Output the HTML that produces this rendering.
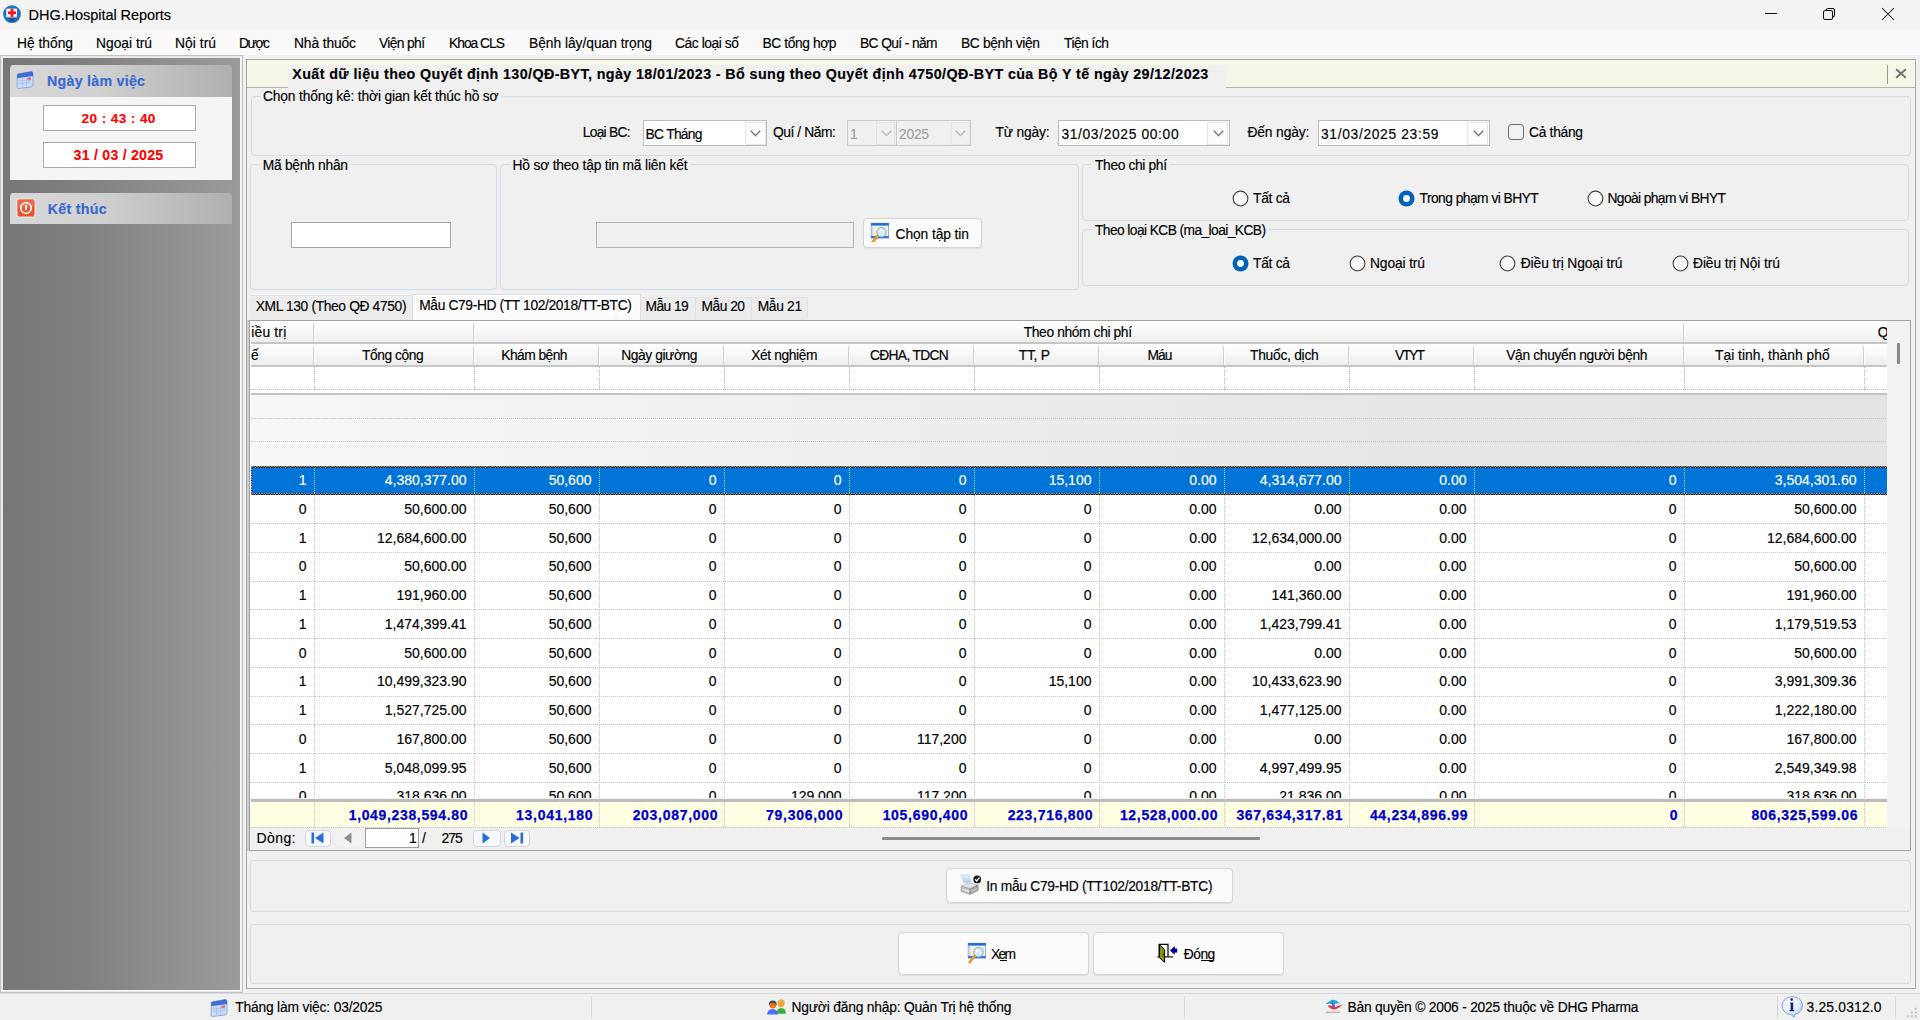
<!DOCTYPE html>
<html><head><meta charset="utf-8"><title>DHG.Hospital Reports</title>
<style>
html,body{margin:0;padding:0;}
body{width:1920px;height:1020px;overflow:hidden;position:relative;background:#f0f0f0;font-family:"Liberation Sans", sans-serif;color:#000;}
.a{position:absolute;box-sizing:border-box;}
.t{white-space:pre;-webkit-text-stroke:0.15px currentColor;}
</style></head><body>
<div class="a" style="left:0px;top:0px;width:1920px;height:29px;background:#f3f3f3"></div>
<svg class="a" style="left:2px;top:4px;" width="20" height="20" viewBox="0 0 20 20">
<circle cx="10" cy="10.1" r="8.9" fill="#2170cc"/>
<rect x="4.3" y="4.7" width="10.6" height="8.9" fill="#fff"/>
<rect x="4.3" y="12.2" width="10.6" height="1.4" fill="#c8d4e4"/>
<rect x="8.6" y="5" width="2.8" height="7.8" fill="#ff1010"/>
<rect x="6" y="7.4" width="8" height="2.8" fill="#ff1010"/>
<rect x="4" y="13.6" width="11.5" height="1.3" fill="#1a4f96"/>
<rect x="8.8" y="14.9" width="2.6" height="1.6" fill="#1a3f76"/>
<rect x="6.5" y="16.5" width="7" height="0.9" fill="#1a3f76"/>
</svg>
<div class="a t" style="left:28.60px;top:8px;font-size:14.5px;line-height:14.5px;letter-spacing:-0.049px;">DHG.Hospital Reports</div>
<div class="a" style="left:1765px;top:13px;width:12px;height:1px;background:#111"></div>
<svg class="a" style="left:1822px;top:7px;" width="14" height="14" viewBox="0 0 14 14">
<path d="M4 3.2 Q4.5 1.5 6.5 1.5 L10.5 1.5 Q12.5 1.5 12.5 3.5 L12.5 7.5 Q12.5 9.5 11 10" fill="none" stroke="#111" stroke-width="1.05"/>
<rect x="1.5" y="3.5" width="9" height="9" rx="1.8" fill="none" stroke="#111" stroke-width="1.05"/>
</svg>
<svg class="a" style="left:1881px;top:7px;" width="14" height="14" viewBox="0 0 14 14"><path d="M1 1 L13 13 M13 1 L1 13" stroke="#111" stroke-width="1.05"/></svg>
<div class="a" style="left:0px;top:29px;width:1920px;height:26px;background:#f9f9f9"></div>
<div class="a t" style="left:17.00px;top:37px;font-size:13.8px;line-height:13.8px;">Hệ thống</div>
<div class="a t" style="left:96.00px;top:37px;font-size:13.8px;line-height:13.8px;">Ngoại trú</div>
<div class="a t" style="left:175.00px;top:37px;font-size:13.8px;line-height:13.8px;letter-spacing:0.060px;">Nội trú</div>
<div class="a t" style="left:239.00px;top:37px;font-size:13.8px;line-height:13.8px;letter-spacing:-1.385px;">Dược</div>
<div class="a t" style="left:294.00px;top:37px;font-size:13.8px;line-height:13.8px;letter-spacing:-0.113px;">Nhà thuốc</div>
<div class="a t" style="left:379.00px;top:37px;font-size:13.8px;line-height:13.8px;letter-spacing:-0.627px;">Viện phí</div>
<div class="a t" style="left:449.00px;top:37px;font-size:13.8px;line-height:13.8px;letter-spacing:-0.987px;">Khoa CLS</div>
<div class="a t" style="left:529.00px;top:37px;font-size:13.8px;line-height:13.8px;letter-spacing:-0.028px;">Bệnh lây/quan trọng</div>
<div class="a t" style="left:675.00px;top:37px;font-size:13.8px;line-height:13.8px;letter-spacing:-0.427px;">Các loại số</div>
<div class="a t" style="left:762.50px;top:37px;font-size:13.8px;line-height:13.8px;letter-spacing:-0.409px;">BC tổng hợp</div>
<div class="a t" style="left:860.00px;top:37px;font-size:13.8px;line-height:13.8px;letter-spacing:-0.622px;">BC Quí - năm</div>
<div class="a t" style="left:961.00px;top:37px;font-size:13.8px;line-height:13.8px;letter-spacing:-0.349px;">BC bệnh viện</div>
<div class="a t" style="left:1064.00px;top:37px;font-size:13.8px;line-height:13.8px;letter-spacing:-0.511px;">Tiện ích</div>
<div class="a" style="left:0px;top:55px;width:243px;height:938px;background:#e9e9e9;border:1.5px solid #c0c2c6;border-right-width:1.8px"></div>
<div class="a" style="left:240px;top:57px;width:1.2px;height:934px;background:#fafafa"></div>
<div class="a" style="left:1.5px;top:990px;width:240px;height:1.2px;background:#fafafa"></div>
<div class="a" style="left:2.9px;top:57.8px;width:236.9px;height:932px;background:linear-gradient(90deg,#767676 0%,#808080 35%,#8e8e8e 65%,#9b9b9b 100%)"></div>
<div class="a" style="left:10px;top:65px;width:222px;height:32px;background:linear-gradient(90deg,#d8d8d8 0%,#d0d0d0 40%,#bdbdbd 75%,#b0b0b0 100%);border-radius:3.5px 3.5px 0 0"></div>
<svg class="a" style="left:15px;top:69px;" width="20" height="21" viewBox="0 0 20 21">
<path d="M2.5 5 L16 2.5 Q18 2.3 18 4.2 L18 16 Q18 17.6 16.3 17.9 L3.8 19.5 Q2 19.7 2 17.9 Z" fill="#c9dcf5" stroke="#7da0d8" stroke-width="0.8"/>
<path d="M2.2 5 L16 2.5 Q18 2.3 18 4.2 L18 7 L2.2 9.2 Z" fill="#3d6fd6"/>
<rect x="12.5" y="8.6" width="3.5" height="2.6" fill="#ef5a5a"/>
<path d="M4 12 L16 10.6 M4 14.6 L16 13.2 M7.5 9.8 L7.7 18 M11.5 9.2 L11.6 17.6" stroke="#9fbde8" stroke-width="0.7"/>
</svg>
<div class="a t" style="left:47.00px;top:74px;font-size:14.2px;line-height:14.2px;font-weight:bold;color:#3868d0;letter-spacing:0.280px;">Ngày làm việc</div>
<div class="a" style="left:10px;top:97px;width:222px;height:83px;background:#f5f5f5"></div>
<div class="a" style="left:42.5px;top:105px;width:153.5px;height:26px;background:#fff;border:1px solid #a9a9a9"></div>
<div class="a t" style="left:81.60px;top:112px;font-size:13.6px;line-height:13.6px;font-weight:bold;color:#ff0000;letter-spacing:0.388px;">20 : 43 : 40</div>
<div class="a" style="left:42.5px;top:141.5px;width:153.5px;height:26px;background:#fff;border:1px solid #a9a9a9"></div>
<div class="a t" style="left:73.55px;top:148px;font-size:14.2px;line-height:14.2px;font-weight:bold;color:#ff0000;letter-spacing:0.225px;">31 / 03 / 2025</div>
<div class="a" style="left:10px;top:193px;width:222px;height:31px;background:linear-gradient(90deg,#d8d8d8 0%,#d0d0d0 40%,#bdbdbd 75%,#b0b0b0 100%);border-radius:3.5px 3.5px 0 0"></div>
<svg class="a" style="left:16px;top:198px;" width="20" height="20" viewBox="0 0 20 20">
<rect x="1" y="1" width="18" height="18" rx="2.5" fill="#e9542c" stroke="#fff" stroke-width="0.8"/>
<rect x="1.5" y="1.5" width="17" height="8" rx="2" fill="#f47a52" opacity="0.6"/>
<circle cx="10" cy="10" r="5.3" fill="none" stroke="#fff" stroke-width="1.6"/>
<rect x="9.1" y="6.8" width="1.8" height="5.4" rx="0.8" fill="#fff"/>
</svg>
<div class="a t" style="left:47.80px;top:202px;font-size:14.2px;line-height:14.2px;font-weight:bold;color:#3868d0;letter-spacing:0.293px;">Kết thúc</div>
<div class="a" style="left:0px;top:992.5px;width:1920px;height:1px;background:#dadada"></div>
<div class="a t" style="left:235.20px;top:1001px;font-size:13.8px;line-height:13.8px;letter-spacing:-0.172px;">Tháng làm việc: 03/2025</div>
<div class="a" style="left:591px;top:996px;width:1px;height:22px;background:#d8d8d8"></div>
<div class="a t" style="left:791.50px;top:1001px;font-size:13.8px;line-height:13.8px;letter-spacing:-0.187px;">Người đăng nhập: Quản Trị hệ thống</div>
<div class="a" style="left:1184px;top:996px;width:1px;height:22px;background:#d8d8d8"></div>
<div class="a t" style="left:1347.50px;top:1001px;font-size:13.8px;line-height:13.8px;letter-spacing:-0.216px;">Bản quyền © 2006 - 2025 thuộc về DHG Pharma</div>
<div class="a" style="left:1777px;top:996px;width:1px;height:22px;background:#d8d8d8"></div>
<div class="a t" style="left:1806.50px;top:1001px;font-size:13.8px;line-height:13.8px;letter-spacing:0.211px;">3.25.0312.0</div>
<div class="a" style="left:1895px;top:996px;width:1px;height:22px;background:#d8d8d8"></div>
<div class="a" style="left:246px;top:59px;width:1670px;height:930px;border:1.5px solid #a8a8a8"></div>
<div class="a" style="left:247px;top:60px;width:1668px;height:27px;background:#f6f6e7"></div>
<div class="a" style="left:247px;top:86.5px;width:1668px;height:1.5px;background:#b4b4b4"></div>
<div class="a" style="left:287.5px;top:64.5px;width:938.5px;height:24px;background:#f0f0f0"></div>
<div class="a t" style="left:292.30px;top:67px;font-size:14.3px;line-height:14.3px;font-weight:bold;letter-spacing:0.391px;">Xuất dữ liệu theo Quyết định 130/QĐ-BYT, ngày 18/01/2023 - Bổ sung theo Quyết định 4750/QĐ-BYT của Bộ Y tế ngày 29/12/2023</div>
<div class="a" style="left:1887px;top:65px;width:1px;height:19px;background:#9a9a9a"></div>
<svg class="a" style="left:1895px;top:68px;" width="12" height="11" viewBox="0 0 12 11"><path d="M1.2 1.2 L10.8 9.8 M10.8 1.2 L1.2 9.8" stroke="#727272" stroke-width="1.9"/></svg>
<div class="a" style="left:250.5px;top:96px;width:1660.5px;height:60px;border:1px solid #d2dce5;border-radius:4px"></div>
<div class="a" style="left:260px;top:90px;width:241.6px;height:12px;background:#f0f0f0"></div>
<div class="a t" style="left:263.00px;top:90px;font-size:13.8px;line-height:13.8px;letter-spacing:-0.170px;">Chọn thống kê: thời gian kết thúc hồ sơ</div>
<div class="a t" style="left:582.70px;top:126px;font-size:13.8px;line-height:13.8px;letter-spacing:-0.703px;">Loại BC:</div>
<div class="a" style="left:642.5px;top:120.2px;width:124.5px;height:26.2px;background:#fff;border:1.5px solid #b9bbc0"></div>
<div class="a" style="left:744.5px;top:121.7px;width:21px;height:23.2px;background:#fcfcfc;border:1px solid #e6e6e6"></div>
<svg class="a" style="left:750.0px;top:130.3px;" width="11" height="7" viewBox="0 0 11 7"><path d="M0.8 0.8 L5.5 5.6 L10.2 0.8" fill="none" stroke="#6e6e6e" stroke-width="1.3"/></svg>
<div class="a t" style="left:645.50px;top:128px;font-size:13.8px;line-height:13.8px;letter-spacing:-0.696px;">BC Tháng</div>
<div class="a t" style="left:773.00px;top:126px;font-size:13.8px;line-height:13.8px;letter-spacing:-0.434px;">Quí / Năm:</div>
<div class="a" style="left:846.5px;top:120.2px;width:50px;height:26.2px;background:#f0f0f0;border:1.5px solid #c9cacd"></div>
<div class="a" style="left:876.0px;top:121.7px;width:19px;height:23.2px;background:#f0f0f0;border:1px solid #e4e4e4"></div>
<svg class="a" style="left:880.5px;top:130.3px;" width="11" height="7" viewBox="0 0 11 7"><path d="M0.8 0.8 L5.5 5.6 L10.2 0.8" fill="none" stroke="#b8b8b8" stroke-width="1.3"/></svg>
<div class="a t" style="left:850.00px;top:128px;font-size:13.8px;line-height:13.8px;color:#a0a0a0;">1</div>
<div class="a" style="left:895.5px;top:120.2px;width:75.5px;height:26.2px;background:#f0f0f0;border:1.5px solid #c9cacd"></div>
<div class="a" style="left:950.5px;top:121.7px;width:19px;height:23.2px;background:#f0f0f0;border:1px solid #e4e4e4"></div>
<svg class="a" style="left:955.0px;top:130.3px;" width="11" height="7" viewBox="0 0 11 7"><path d="M0.8 0.8 L5.5 5.6 L10.2 0.8" fill="none" stroke="#b8b8b8" stroke-width="1.3"/></svg>
<div class="a t" style="left:899.00px;top:128px;font-size:13.8px;line-height:13.8px;color:#a0a0a0;letter-spacing:-0.234px;">2025</div>
<div class="a t" style="left:995.50px;top:126px;font-size:13.8px;line-height:13.8px;letter-spacing:-0.179px;">Từ ngày:</div>
<div class="a" style="left:1057.5px;top:120.2px;width:172px;height:26.2px;background:#fff;border:1.5px solid #b9bbc0"></div>
<div class="a" style="left:1207.0px;top:121.7px;width:21px;height:23.2px;background:#fcfcfc;border:1px solid #e6e6e6"></div>
<svg class="a" style="left:1212.5px;top:130.3px;" width="11" height="7" viewBox="0 0 11 7"><path d="M0.8 0.8 L5.5 5.6 L10.2 0.8" fill="none" stroke="#6e6e6e" stroke-width="1.3"/></svg>
<div class="a t" style="left:1061.40px;top:128px;font-size:13.8px;line-height:13.8px;letter-spacing:0.652px;">31/03/2025 00:00</div>
<div class="a t" style="left:1247.40px;top:126px;font-size:13.8px;line-height:13.8px;letter-spacing:-0.113px;">Đến ngày:</div>
<div class="a" style="left:1317.5px;top:120.2px;width:172px;height:26.2px;background:#fff;border:1.5px solid #b9bbc0"></div>
<div class="a" style="left:1467.0px;top:121.7px;width:21px;height:23.2px;background:#fcfcfc;border:1px solid #e6e6e6"></div>
<svg class="a" style="left:1472.5px;top:130.3px;" width="11" height="7" viewBox="0 0 11 7"><path d="M0.8 0.8 L5.5 5.6 L10.2 0.8" fill="none" stroke="#6e6e6e" stroke-width="1.3"/></svg>
<div class="a t" style="left:1321.00px;top:128px;font-size:13.8px;line-height:13.8px;letter-spacing:0.672px;">31/03/2025 23:59</div>
<div class="a" style="left:1508.3px;top:124px;width:16.2px;height:16px;border:1.5px solid #6a6a6a;border-radius:3.5px;background:#f2f2f2"></div>
<div class="a t" style="left:1529.00px;top:126px;font-size:13.8px;line-height:13.8px;letter-spacing:-0.286px;">Cả tháng</div>
<div class="a" style="left:250px;top:164px;width:246.5px;height:125.5px;border:1px solid #d2dce5;border-radius:4px"></div>
<div class="a" style="left:259.75px;top:158px;width:91.2px;height:12px;background:#f0f0f0"></div>
<div class="a t" style="left:262.75px;top:159px;font-size:13.8px;line-height:13.8px;letter-spacing:-0.274px;">Mã bệnh nhân</div>
<div class="a" style="left:291px;top:221.5px;width:160px;height:26.5px;background:#fff;border:1.5px solid #a6a6a6"></div>
<div class="a" style="left:500px;top:164px;width:579px;height:125.5px;border:1px solid #d2dce5;border-radius:4px"></div>
<div class="a" style="left:509.5px;top:158px;width:181px;height:12px;background:#f0f0f0"></div>
<div class="a t" style="left:512.50px;top:159px;font-size:13.8px;line-height:13.8px;letter-spacing:-0.175px;">Hồ sơ theo tập tin mã liên kết</div>
<div class="a" style="left:596px;top:221.5px;width:257.5px;height:26.5px;background:#f0f0f0;border:1.5px solid #b4b4b4"></div>
<div class="a" style="left:862.5px;top:218px;width:119px;height:30px;background:#fbfbfb;border:1px solid #d3d3d3;border-radius:4px;box-shadow:0 1px 0 #e2e2e2"></div>
<svg class="a" style="left:870px;top:222px;" width="20" height="20" viewBox="0 0 20 20">
<rect x="1.2" y="1.3" width="17.4" height="14.8" fill="#f4efe4" stroke="#7f9fca" stroke-width="0.8"/>
<rect x="1" y="1" width="17.8" height="2.6" fill="#1f6fd8"/>
<rect x="1" y="13.9" width="17.8" height="2.2" fill="#3f7bd6"/>
<rect x="2.2" y="3.6" width="1.2" height="10.3" fill="#c9d6ea"/>
<circle cx="11.5" cy="10.2" r="4.7" fill="#d6ecf6" stroke="#8ea4b8" stroke-width="1"/>
<circle cx="10.2" cy="8.6" r="1.4" fill="#fff" opacity="0.9"/>
<path d="M7.6 14.2 L2.6 20.2" stroke="#e59a2c" stroke-width="2.6" stroke-linecap="round"/>
</svg>
<div class="a t" style="left:895.50px;top:228px;font-size:13.8px;line-height:13.8px;letter-spacing:-0.082px;">Chọn tập tin</div>
<div class="a" style="left:1082px;top:164px;width:827px;height:56.5px;border:1px solid #d2dce5;border-radius:4px"></div>
<div class="a" style="left:1092px;top:158px;width:78px;height:12px;background:#f0f0f0"></div>
<div class="a t" style="left:1095.00px;top:159px;font-size:13.8px;line-height:13.8px;letter-spacing:-0.358px;">Theo chi phí</div>
<div class="a" style="left:1082px;top:229.2px;width:827px;height:57px;border:1px solid #d2dce5;border-radius:4px"></div>
<div class="a" style="left:1092px;top:223.2px;width:177px;height:12px;background:#f0f0f0"></div>
<div class="a t" style="left:1095.00px;top:224px;font-size:13.8px;line-height:13.8px;letter-spacing:-0.590px;">Theo loại KCB (ma_loai_KCB)</div>
<svg class="a" style="left:1231.5px;top:189.5px;" width="17" height="17" viewBox="0 0 17 17"><circle cx="8.5" cy="8.5" r="7.4" fill="#f8f8f8" stroke="#3c3c3c" stroke-width="1.05"/></svg>
<div class="a t" style="left:1253.00px;top:192px;font-size:13.8px;line-height:13.8px;letter-spacing:-0.269px;">Tất cả</div>
<svg class="a" style="left:1397.5px;top:189.5px;" width="17" height="17" viewBox="0 0 17 17"><circle cx="8.5" cy="8.5" r="8" fill="#0063b8"/><circle cx="8.5" cy="8.5" r="3.4" fill="#fff"/></svg>
<div class="a t" style="left:1419.50px;top:192px;font-size:13.8px;line-height:13.8px;letter-spacing:-0.530px;">Trong phạm vi BHYT</div>
<svg class="a" style="left:1586.5px;top:189.5px;" width="17" height="17" viewBox="0 0 17 17"><circle cx="8.5" cy="8.5" r="7.4" fill="#f8f8f8" stroke="#3c3c3c" stroke-width="1.05"/></svg>
<div class="a t" style="left:1607.50px;top:192px;font-size:13.8px;line-height:13.8px;letter-spacing:-0.608px;">Ngoài phạm vi BHYT</div>
<svg class="a" style="left:1231.5px;top:254.5px;" width="17" height="17" viewBox="0 0 17 17"><circle cx="8.5" cy="8.5" r="8" fill="#0063b8"/><circle cx="8.5" cy="8.5" r="3.4" fill="#fff"/></svg>
<div class="a t" style="left:1253.00px;top:257px;font-size:13.8px;line-height:13.8px;letter-spacing:-0.269px;">Tất cả</div>
<svg class="a" style="left:1349.0px;top:254.5px;" width="17" height="17" viewBox="0 0 17 17"><circle cx="8.5" cy="8.5" r="7.4" fill="#f8f8f8" stroke="#3c3c3c" stroke-width="1.05"/></svg>
<div class="a t" style="left:1370.00px;top:257px;font-size:13.8px;line-height:13.8px;letter-spacing:-0.123px;">Ngoại trú</div>
<svg class="a" style="left:1499.0px;top:254.5px;" width="17" height="17" viewBox="0 0 17 17"><circle cx="8.5" cy="8.5" r="7.4" fill="#f8f8f8" stroke="#3c3c3c" stroke-width="1.05"/></svg>
<div class="a t" style="left:1520.75px;top:257px;font-size:13.8px;line-height:13.8px;letter-spacing:-0.105px;">Điều trị Ngoại trú</div>
<svg class="a" style="left:1671.5px;top:254.5px;" width="17" height="17" viewBox="0 0 17 17"><circle cx="8.5" cy="8.5" r="7.4" fill="#f8f8f8" stroke="#3c3c3c" stroke-width="1.05"/></svg>
<div class="a t" style="left:1693.00px;top:257px;font-size:13.8px;line-height:13.8px;letter-spacing:-0.078px;">Điều trị Nội trú</div>
<div class="a" style="left:250px;top:295px;width:162px;height:1px;background:#e3e3e3"></div>
<div class="a" style="left:250px;top:296.5px;width:162px;height:23px;background:#ececec"></div>
<div class="a" style="left:412px;top:293.5px;width:229px;height:26.5px;background:#fbfbfb;border:1px solid #dedede;border-bottom:none"></div>
<div class="a" style="left:641px;top:296.5px;width:166px;height:23px;background:#ececec;border-top:1px solid #e2e2e2"></div>
<div class="a" style="left:695px;top:297px;width:1px;height:22px;background:#e0e0e0"></div>
<div class="a" style="left:751px;top:297px;width:1px;height:22px;background:#e0e0e0"></div>
<div class="a" style="left:807px;top:297px;width:1px;height:22px;background:#e0e0e0"></div>
<div class="a t" style="left:255.70px;top:300px;font-size:13.8px;line-height:13.8px;letter-spacing:-0.354px;">XML 130 (Theo QĐ 4750)</div>
<div class="a t" style="left:419.25px;top:299px;font-size:13.8px;line-height:13.8px;letter-spacing:-0.368px;">Mẫu C79-HD (TT 102/2018/TT-BTC)</div>
<div class="a t" style="left:645.50px;top:300px;font-size:13.8px;line-height:13.8px;letter-spacing:-0.546px;">Mẫu 19</div>
<div class="a t" style="left:701.50px;top:300px;font-size:13.8px;line-height:13.8px;letter-spacing:-0.506px;">Mẫu 20</div>
<div class="a t" style="left:757.70px;top:300px;font-size:13.8px;line-height:13.8px;letter-spacing:-0.326px;">Mẫu 21</div>
<div class="a" style="left:249.5px;top:319.5px;width:1661px;height:531px;background:#f0f0f0"></div>
<div class="a" style="left:250px;top:320px;width:1637px;height:478px;overflow:hidden;background:#fff">
<div class="a" style="left:0.50px;top:0.50px;width:1636.50px;height:22.50px;background:linear-gradient(180deg,#ffffff 0%,#f7f7f7 55%,#ececec 100%)"></div>
<div class="a" style="left:0.50px;top:22.00px;width:1636.50px;height:2.00px;background:#c6c6c6"></div>
<div class="a" style="left:63.00px;top:3.00px;width:2.00px;height:19.00px;background:#cfcfcf;border-right:1px solid #fff"></div>
<div class="a" style="left:223.00px;top:3.00px;width:2.00px;height:19.00px;background:#cfcfcf;border-right:1px solid #fff"></div>
<div class="a" style="left:1433.00px;top:3.00px;width:2.00px;height:19.00px;background:#cfcfcf;border-right:1px solid #fff"></div>
<div class="a" style="left:0.50px;top:24.00px;width:1636.50px;height:21.00px;background:linear-gradient(180deg,#ffffff 0%,#f7f7f7 55%,#ececec 100%)"></div>
<div class="a" style="left:0.50px;top:44.50px;width:1636.50px;height:2.00px;background:#c6c6c6"></div>
<div class="a" style="left:63.00px;top:25.50px;width:2.00px;height:19.00px;background:#cfcfcf;border-right:1px solid #fff"></div>
<div class="a" style="left:223.00px;top:25.50px;width:2.00px;height:19.00px;background:#cfcfcf;border-right:1px solid #fff"></div>
<div class="a" style="left:348.00px;top:25.50px;width:2.00px;height:19.00px;background:#cfcfcf;border-right:1px solid #fff"></div>
<div class="a" style="left:473.00px;top:25.50px;width:2.00px;height:19.00px;background:#cfcfcf;border-right:1px solid #fff"></div>
<div class="a" style="left:598.00px;top:25.50px;width:2.00px;height:19.00px;background:#cfcfcf;border-right:1px solid #fff"></div>
<div class="a" style="left:723.00px;top:25.50px;width:2.00px;height:19.00px;background:#cfcfcf;border-right:1px solid #fff"></div>
<div class="a" style="left:848.00px;top:25.50px;width:2.00px;height:19.00px;background:#cfcfcf;border-right:1px solid #fff"></div>
<div class="a" style="left:973.00px;top:25.50px;width:2.00px;height:19.00px;background:#cfcfcf;border-right:1px solid #fff"></div>
<div class="a" style="left:1098.00px;top:25.50px;width:2.00px;height:19.00px;background:#cfcfcf;border-right:1px solid #fff"></div>
<div class="a" style="left:1223.00px;top:25.50px;width:2.00px;height:19.00px;background:#cfcfcf;border-right:1px solid #fff"></div>
<div class="a" style="left:1433.00px;top:25.50px;width:2.00px;height:19.00px;background:#cfcfcf;border-right:1px solid #fff"></div>
<div class="a" style="left:1613.00px;top:25.50px;width:2.00px;height:19.00px;background:#cfcfcf;border-right:1px solid #fff"></div>
<div class="a t" style="left:1.25px;top:6px;font-size:13.8px;line-height:13.8px;letter-spacing:0.208px;">iều trị</div>
<div class="a t" style="left:773.75px;top:6px;font-size:13.8px;line-height:13.8px;letter-spacing:-0.377px;">Theo nhóm chi phí</div>
<div class="a t" style="left:1627.70px;top:6px;font-size:13.8px;line-height:13.8px;">Q</div>
<div class="a t" style="left:1.00px;top:29px;font-size:13.8px;line-height:13.8px;">ế</div>
<div class="a t" style="left:112.00px;top:29px;font-size:13.8px;line-height:13.8px;letter-spacing:-0.438px;">Tổng cộng</div>
<div class="a t" style="left:251.25px;top:29px;font-size:13.8px;line-height:13.8px;letter-spacing:-0.541px;">Khám bệnh</div>
<div class="a t" style="left:371.25px;top:29px;font-size:13.8px;line-height:13.8px;letter-spacing:-0.417px;">Ngày giường</div>
<div class="a t" style="left:501.25px;top:29px;font-size:13.8px;line-height:13.8px;letter-spacing:-0.394px;">Xét nghiệm</div>
<div class="a t" style="left:620.00px;top:29px;font-size:13.8px;line-height:13.8px;letter-spacing:-0.677px;">CĐHA, TDCN</div>
<div class="a t" style="left:768.75px;top:29px;font-size:13.8px;line-height:13.8px;letter-spacing:-0.238px;">TT, P</div>
<div class="a t" style="left:897.50px;top:29px;font-size:13.8px;line-height:13.8px;letter-spacing:-0.922px;">Máu</div>
<div class="a t" style="left:1000.00px;top:29px;font-size:13.8px;line-height:13.8px;letter-spacing:-0.258px;">Thuốc, dịch</div>
<div class="a t" style="left:1145.00px;top:29px;font-size:13.8px;line-height:13.8px;letter-spacing:-1.755px;">VTYT</div>
<div class="a t" style="left:1256.25px;top:29px;font-size:13.8px;line-height:13.8px;letter-spacing:-0.334px;">Vận chuyển người bệnh</div>
<div class="a t" style="left:1465.00px;top:29px;font-size:13.8px;line-height:13.8px;letter-spacing:0.017px;">Tại tinh, thành phố</div>
<div class="a" style="left:63.50px;top:46.50px;width:1.00px;height:23.00px;background-image:linear-gradient(180deg,#b8b8b8 50%,transparent 50%);background-size:1px 2px;background-repeat:repeat-y"></div>
<div class="a" style="left:223.50px;top:46.50px;width:1.00px;height:23.00px;background-image:linear-gradient(180deg,#b8b8b8 50%,transparent 50%);background-size:1px 2px;background-repeat:repeat-y"></div>
<div class="a" style="left:348.50px;top:46.50px;width:1.00px;height:23.00px;background-image:linear-gradient(180deg,#b8b8b8 50%,transparent 50%);background-size:1px 2px;background-repeat:repeat-y"></div>
<div class="a" style="left:473.50px;top:46.50px;width:1.00px;height:23.00px;background-image:linear-gradient(180deg,#b8b8b8 50%,transparent 50%);background-size:1px 2px;background-repeat:repeat-y"></div>
<div class="a" style="left:598.50px;top:46.50px;width:1.00px;height:23.00px;background-image:linear-gradient(180deg,#b8b8b8 50%,transparent 50%);background-size:1px 2px;background-repeat:repeat-y"></div>
<div class="a" style="left:723.50px;top:46.50px;width:1.00px;height:23.00px;background-image:linear-gradient(180deg,#b8b8b8 50%,transparent 50%);background-size:1px 2px;background-repeat:repeat-y"></div>
<div class="a" style="left:848.50px;top:46.50px;width:1.00px;height:23.00px;background-image:linear-gradient(180deg,#b8b8b8 50%,transparent 50%);background-size:1px 2px;background-repeat:repeat-y"></div>
<div class="a" style="left:973.50px;top:46.50px;width:1.00px;height:23.00px;background-image:linear-gradient(180deg,#b8b8b8 50%,transparent 50%);background-size:1px 2px;background-repeat:repeat-y"></div>
<div class="a" style="left:1098.50px;top:46.50px;width:1.00px;height:23.00px;background-image:linear-gradient(180deg,#b8b8b8 50%,transparent 50%);background-size:1px 2px;background-repeat:repeat-y"></div>
<div class="a" style="left:1223.50px;top:46.50px;width:1.00px;height:23.00px;background-image:linear-gradient(180deg,#b8b8b8 50%,transparent 50%);background-size:1px 2px;background-repeat:repeat-y"></div>
<div class="a" style="left:1433.50px;top:46.50px;width:1.00px;height:23.00px;background-image:linear-gradient(180deg,#b8b8b8 50%,transparent 50%);background-size:1px 2px;background-repeat:repeat-y"></div>
<div class="a" style="left:1613.50px;top:46.50px;width:1.00px;height:23.00px;background-image:linear-gradient(180deg,#b8b8b8 50%,transparent 50%);background-size:1px 2px;background-repeat:repeat-y"></div>
<div class="a" style="left:0.50px;top:69.00px;width:1636.50px;height:1.00px;background-image:linear-gradient(90deg,#b8b8b8 50%,transparent 50%);background-size:2px 1px;background-repeat:repeat-x"></div>
<div class="a" style="left:0.50px;top:72.50px;width:1636.50px;height:2.00px;background:#c4c4c4"></div>
<div class="a" style="left:0.50px;top:74.50px;width:1636.50px;height:71.50px;background:linear-gradient(90deg,#f7f7f7 0%,#efefef 35%,#e6e6e6 70%,#e3e3e3 100%)"></div>
<div class="a" style="left:0.50px;top:97.50px;width:1636.50px;height:1.00px;background-image:linear-gradient(90deg,#c2c2c2 50%,transparent 50%);background-size:2px 1px;background-repeat:repeat-x"></div>
<div class="a" style="left:0.50px;top:121.00px;width:1636.50px;height:1.00px;background-image:linear-gradient(90deg,#c2c2c2 50%,transparent 50%);background-size:2px 1px;background-repeat:repeat-x"></div>
<div class="a" style="left:0.50px;top:146.00px;width:1636.50px;height:28.75px;background:#0074d7"></div>
<div class="a" style="left:0.50px;top:146.00px;width:1636.50px;height:1.50px;background:conic-gradient(#111 25%,#9a9a9a 0 50%,#111 0 75%,#9a9a9a 0) 0 0/2.5px 2.5px"></div>
<div class="a" style="left:0.50px;top:173.25px;width:1636.50px;height:1.50px;background:conic-gradient(#111 25%,#9a9a9a 0 50%,#111 0 75%,#9a9a9a 0) 0 0/2.5px 2.5px"></div>
<div class="a" style="left:0.50px;top:146.00px;width:1.50px;height:28.75px;background:conic-gradient(#111 25%,#9a9a9a 0 50%,#111 0 75%,#9a9a9a 0) 0 0/2.5px 2.5px"></div>
<div class="a" style="left:63.50px;top:147.50px;width:1.00px;height:25.75px;background-image:linear-gradient(180deg,#b9d9f5 50%,transparent 50%);background-size:1px 2px;background-repeat:repeat-y"></div>
<div class="a" style="left:223.50px;top:147.50px;width:1.00px;height:25.75px;background-image:linear-gradient(180deg,#b9d9f5 50%,transparent 50%);background-size:1px 2px;background-repeat:repeat-y"></div>
<div class="a" style="left:348.50px;top:147.50px;width:1.00px;height:25.75px;background-image:linear-gradient(180deg,#b9d9f5 50%,transparent 50%);background-size:1px 2px;background-repeat:repeat-y"></div>
<div class="a" style="left:473.50px;top:147.50px;width:1.00px;height:25.75px;background-image:linear-gradient(180deg,#b9d9f5 50%,transparent 50%);background-size:1px 2px;background-repeat:repeat-y"></div>
<div class="a" style="left:598.50px;top:147.50px;width:1.00px;height:25.75px;background-image:linear-gradient(180deg,#b9d9f5 50%,transparent 50%);background-size:1px 2px;background-repeat:repeat-y"></div>
<div class="a" style="left:723.50px;top:147.50px;width:1.00px;height:25.75px;background-image:linear-gradient(180deg,#b9d9f5 50%,transparent 50%);background-size:1px 2px;background-repeat:repeat-y"></div>
<div class="a" style="left:848.50px;top:147.50px;width:1.00px;height:25.75px;background-image:linear-gradient(180deg,#b9d9f5 50%,transparent 50%);background-size:1px 2px;background-repeat:repeat-y"></div>
<div class="a" style="left:973.50px;top:147.50px;width:1.00px;height:25.75px;background-image:linear-gradient(180deg,#b9d9f5 50%,transparent 50%);background-size:1px 2px;background-repeat:repeat-y"></div>
<div class="a" style="left:1098.50px;top:147.50px;width:1.00px;height:25.75px;background-image:linear-gradient(180deg,#b9d9f5 50%,transparent 50%);background-size:1px 2px;background-repeat:repeat-y"></div>
<div class="a" style="left:1223.50px;top:147.50px;width:1.00px;height:25.75px;background-image:linear-gradient(180deg,#b9d9f5 50%,transparent 50%);background-size:1px 2px;background-repeat:repeat-y"></div>
<div class="a" style="left:1433.50px;top:147.50px;width:1.00px;height:25.75px;background-image:linear-gradient(180deg,#b9d9f5 50%,transparent 50%);background-size:1px 2px;background-repeat:repeat-y"></div>
<div class="a" style="left:1613.50px;top:147.50px;width:1.00px;height:25.75px;background-image:linear-gradient(180deg,#b9d9f5 50%,transparent 50%);background-size:1px 2px;background-repeat:repeat-y"></div>
<div class="a t" style="left:48.70px;top:153px;font-size:14px;line-height:14px;color:#fff;">1</div>
<div class="a t" style="left:134.75px;top:153px;font-size:14px;line-height:14px;color:#fff;">4,380,377.00</div>
<div class="a t" style="left:298.67px;top:153px;font-size:14px;line-height:14px;color:#fff;">50,600</div>
<div class="a t" style="left:458.70px;top:153px;font-size:14px;line-height:14px;color:#fff;">0</div>
<div class="a t" style="left:583.70px;top:153px;font-size:14px;line-height:14px;color:#fff;">0</div>
<div class="a t" style="left:708.70px;top:153px;font-size:14px;line-height:14px;color:#fff;">0</div>
<div class="a t" style="left:798.67px;top:153px;font-size:14px;line-height:14px;color:#fff;">15,100</div>
<div class="a t" style="left:939.25px;top:153px;font-size:14px;line-height:14px;color:#fff;">0.00</div>
<div class="a t" style="left:1009.75px;top:153px;font-size:14px;line-height:14px;color:#fff;">4,314,677.00</div>
<div class="a t" style="left:1189.25px;top:153px;font-size:14px;line-height:14px;color:#fff;">0.00</div>
<div class="a t" style="left:1418.70px;top:153px;font-size:14px;line-height:14px;color:#fff;">0</div>
<div class="a t" style="left:1524.75px;top:153px;font-size:14px;line-height:14px;color:#fff;">3,504,301.60</div>
<div class="a" style="left:0.50px;top:203.00px;width:1636.50px;height:1.00px;background-image:linear-gradient(90deg,#c4c4c4 50%,transparent 50%);background-size:2px 1px;background-repeat:repeat-x"></div>
<div class="a" style="left:63.50px;top:174.75px;width:1.00px;height:28.75px;background-image:linear-gradient(180deg,#c4c4c4 50%,transparent 50%);background-size:1px 2px;background-repeat:repeat-y"></div>
<div class="a" style="left:223.50px;top:174.75px;width:1.00px;height:28.75px;background-image:linear-gradient(180deg,#c4c4c4 50%,transparent 50%);background-size:1px 2px;background-repeat:repeat-y"></div>
<div class="a" style="left:348.50px;top:174.75px;width:1.00px;height:28.75px;background-image:linear-gradient(180deg,#c4c4c4 50%,transparent 50%);background-size:1px 2px;background-repeat:repeat-y"></div>
<div class="a" style="left:473.50px;top:174.75px;width:1.00px;height:28.75px;background-image:linear-gradient(180deg,#c4c4c4 50%,transparent 50%);background-size:1px 2px;background-repeat:repeat-y"></div>
<div class="a" style="left:598.50px;top:174.75px;width:1.00px;height:28.75px;background-image:linear-gradient(180deg,#c4c4c4 50%,transparent 50%);background-size:1px 2px;background-repeat:repeat-y"></div>
<div class="a" style="left:723.50px;top:174.75px;width:1.00px;height:28.75px;background-image:linear-gradient(180deg,#c4c4c4 50%,transparent 50%);background-size:1px 2px;background-repeat:repeat-y"></div>
<div class="a" style="left:848.50px;top:174.75px;width:1.00px;height:28.75px;background-image:linear-gradient(180deg,#c4c4c4 50%,transparent 50%);background-size:1px 2px;background-repeat:repeat-y"></div>
<div class="a" style="left:973.50px;top:174.75px;width:1.00px;height:28.75px;background-image:linear-gradient(180deg,#c4c4c4 50%,transparent 50%);background-size:1px 2px;background-repeat:repeat-y"></div>
<div class="a" style="left:1098.50px;top:174.75px;width:1.00px;height:28.75px;background-image:linear-gradient(180deg,#c4c4c4 50%,transparent 50%);background-size:1px 2px;background-repeat:repeat-y"></div>
<div class="a" style="left:1223.50px;top:174.75px;width:1.00px;height:28.75px;background-image:linear-gradient(180deg,#c4c4c4 50%,transparent 50%);background-size:1px 2px;background-repeat:repeat-y"></div>
<div class="a" style="left:1433.50px;top:174.75px;width:1.00px;height:28.75px;background-image:linear-gradient(180deg,#c4c4c4 50%,transparent 50%);background-size:1px 2px;background-repeat:repeat-y"></div>
<div class="a" style="left:1613.50px;top:174.75px;width:1.00px;height:28.75px;background-image:linear-gradient(180deg,#c4c4c4 50%,transparent 50%);background-size:1px 2px;background-repeat:repeat-y"></div>
<div class="a t" style="left:48.70px;top:182px;font-size:14px;line-height:14px;">0</div>
<div class="a t" style="left:154.20px;top:182px;font-size:14px;line-height:14px;">50,600.00</div>
<div class="a t" style="left:298.67px;top:182px;font-size:14px;line-height:14px;">50,600</div>
<div class="a t" style="left:458.70px;top:182px;font-size:14px;line-height:14px;">0</div>
<div class="a t" style="left:583.70px;top:182px;font-size:14px;line-height:14px;">0</div>
<div class="a t" style="left:708.70px;top:182px;font-size:14px;line-height:14px;">0</div>
<div class="a t" style="left:833.70px;top:182px;font-size:14px;line-height:14px;">0</div>
<div class="a t" style="left:939.25px;top:182px;font-size:14px;line-height:14px;">0.00</div>
<div class="a t" style="left:1064.25px;top:182px;font-size:14px;line-height:14px;">0.00</div>
<div class="a t" style="left:1189.25px;top:182px;font-size:14px;line-height:14px;">0.00</div>
<div class="a t" style="left:1418.70px;top:182px;font-size:14px;line-height:14px;">0</div>
<div class="a t" style="left:1544.20px;top:182px;font-size:14px;line-height:14px;">50,600.00</div>
<div class="a" style="left:0.50px;top:231.75px;width:1636.50px;height:1.00px;background-image:linear-gradient(90deg,#c4c4c4 50%,transparent 50%);background-size:2px 1px;background-repeat:repeat-x"></div>
<div class="a" style="left:63.50px;top:203.50px;width:1.00px;height:28.75px;background-image:linear-gradient(180deg,#c4c4c4 50%,transparent 50%);background-size:1px 2px;background-repeat:repeat-y"></div>
<div class="a" style="left:223.50px;top:203.50px;width:1.00px;height:28.75px;background-image:linear-gradient(180deg,#c4c4c4 50%,transparent 50%);background-size:1px 2px;background-repeat:repeat-y"></div>
<div class="a" style="left:348.50px;top:203.50px;width:1.00px;height:28.75px;background-image:linear-gradient(180deg,#c4c4c4 50%,transparent 50%);background-size:1px 2px;background-repeat:repeat-y"></div>
<div class="a" style="left:473.50px;top:203.50px;width:1.00px;height:28.75px;background-image:linear-gradient(180deg,#c4c4c4 50%,transparent 50%);background-size:1px 2px;background-repeat:repeat-y"></div>
<div class="a" style="left:598.50px;top:203.50px;width:1.00px;height:28.75px;background-image:linear-gradient(180deg,#c4c4c4 50%,transparent 50%);background-size:1px 2px;background-repeat:repeat-y"></div>
<div class="a" style="left:723.50px;top:203.50px;width:1.00px;height:28.75px;background-image:linear-gradient(180deg,#c4c4c4 50%,transparent 50%);background-size:1px 2px;background-repeat:repeat-y"></div>
<div class="a" style="left:848.50px;top:203.50px;width:1.00px;height:28.75px;background-image:linear-gradient(180deg,#c4c4c4 50%,transparent 50%);background-size:1px 2px;background-repeat:repeat-y"></div>
<div class="a" style="left:973.50px;top:203.50px;width:1.00px;height:28.75px;background-image:linear-gradient(180deg,#c4c4c4 50%,transparent 50%);background-size:1px 2px;background-repeat:repeat-y"></div>
<div class="a" style="left:1098.50px;top:203.50px;width:1.00px;height:28.75px;background-image:linear-gradient(180deg,#c4c4c4 50%,transparent 50%);background-size:1px 2px;background-repeat:repeat-y"></div>
<div class="a" style="left:1223.50px;top:203.50px;width:1.00px;height:28.75px;background-image:linear-gradient(180deg,#c4c4c4 50%,transparent 50%);background-size:1px 2px;background-repeat:repeat-y"></div>
<div class="a" style="left:1433.50px;top:203.50px;width:1.00px;height:28.75px;background-image:linear-gradient(180deg,#c4c4c4 50%,transparent 50%);background-size:1px 2px;background-repeat:repeat-y"></div>
<div class="a" style="left:1613.50px;top:203.50px;width:1.00px;height:28.75px;background-image:linear-gradient(180deg,#c4c4c4 50%,transparent 50%);background-size:1px 2px;background-repeat:repeat-y"></div>
<div class="a t" style="left:48.70px;top:211px;font-size:14px;line-height:14px;">1</div>
<div class="a t" style="left:126.97px;top:211px;font-size:14px;line-height:14px;">12,684,600.00</div>
<div class="a t" style="left:298.67px;top:211px;font-size:14px;line-height:14px;">50,600</div>
<div class="a t" style="left:458.70px;top:211px;font-size:14px;line-height:14px;">0</div>
<div class="a t" style="left:583.70px;top:211px;font-size:14px;line-height:14px;">0</div>
<div class="a t" style="left:708.70px;top:211px;font-size:14px;line-height:14px;">0</div>
<div class="a t" style="left:833.70px;top:211px;font-size:14px;line-height:14px;">0</div>
<div class="a t" style="left:939.25px;top:211px;font-size:14px;line-height:14px;">0.00</div>
<div class="a t" style="left:1001.97px;top:211px;font-size:14px;line-height:14px;">12,634,000.00</div>
<div class="a t" style="left:1189.25px;top:211px;font-size:14px;line-height:14px;">0.00</div>
<div class="a t" style="left:1418.70px;top:211px;font-size:14px;line-height:14px;">0</div>
<div class="a t" style="left:1516.97px;top:211px;font-size:14px;line-height:14px;">12,684,600.00</div>
<div class="a" style="left:0.50px;top:260.50px;width:1636.50px;height:1.00px;background-image:linear-gradient(90deg,#c4c4c4 50%,transparent 50%);background-size:2px 1px;background-repeat:repeat-x"></div>
<div class="a" style="left:63.50px;top:232.25px;width:1.00px;height:28.75px;background-image:linear-gradient(180deg,#c4c4c4 50%,transparent 50%);background-size:1px 2px;background-repeat:repeat-y"></div>
<div class="a" style="left:223.50px;top:232.25px;width:1.00px;height:28.75px;background-image:linear-gradient(180deg,#c4c4c4 50%,transparent 50%);background-size:1px 2px;background-repeat:repeat-y"></div>
<div class="a" style="left:348.50px;top:232.25px;width:1.00px;height:28.75px;background-image:linear-gradient(180deg,#c4c4c4 50%,transparent 50%);background-size:1px 2px;background-repeat:repeat-y"></div>
<div class="a" style="left:473.50px;top:232.25px;width:1.00px;height:28.75px;background-image:linear-gradient(180deg,#c4c4c4 50%,transparent 50%);background-size:1px 2px;background-repeat:repeat-y"></div>
<div class="a" style="left:598.50px;top:232.25px;width:1.00px;height:28.75px;background-image:linear-gradient(180deg,#c4c4c4 50%,transparent 50%);background-size:1px 2px;background-repeat:repeat-y"></div>
<div class="a" style="left:723.50px;top:232.25px;width:1.00px;height:28.75px;background-image:linear-gradient(180deg,#c4c4c4 50%,transparent 50%);background-size:1px 2px;background-repeat:repeat-y"></div>
<div class="a" style="left:848.50px;top:232.25px;width:1.00px;height:28.75px;background-image:linear-gradient(180deg,#c4c4c4 50%,transparent 50%);background-size:1px 2px;background-repeat:repeat-y"></div>
<div class="a" style="left:973.50px;top:232.25px;width:1.00px;height:28.75px;background-image:linear-gradient(180deg,#c4c4c4 50%,transparent 50%);background-size:1px 2px;background-repeat:repeat-y"></div>
<div class="a" style="left:1098.50px;top:232.25px;width:1.00px;height:28.75px;background-image:linear-gradient(180deg,#c4c4c4 50%,transparent 50%);background-size:1px 2px;background-repeat:repeat-y"></div>
<div class="a" style="left:1223.50px;top:232.25px;width:1.00px;height:28.75px;background-image:linear-gradient(180deg,#c4c4c4 50%,transparent 50%);background-size:1px 2px;background-repeat:repeat-y"></div>
<div class="a" style="left:1433.50px;top:232.25px;width:1.00px;height:28.75px;background-image:linear-gradient(180deg,#c4c4c4 50%,transparent 50%);background-size:1px 2px;background-repeat:repeat-y"></div>
<div class="a" style="left:1613.50px;top:232.25px;width:1.00px;height:28.75px;background-image:linear-gradient(180deg,#c4c4c4 50%,transparent 50%);background-size:1px 2px;background-repeat:repeat-y"></div>
<div class="a t" style="left:48.70px;top:239px;font-size:14px;line-height:14px;">0</div>
<div class="a t" style="left:154.20px;top:239px;font-size:14px;line-height:14px;">50,600.00</div>
<div class="a t" style="left:298.67px;top:239px;font-size:14px;line-height:14px;">50,600</div>
<div class="a t" style="left:458.70px;top:239px;font-size:14px;line-height:14px;">0</div>
<div class="a t" style="left:583.70px;top:239px;font-size:14px;line-height:14px;">0</div>
<div class="a t" style="left:708.70px;top:239px;font-size:14px;line-height:14px;">0</div>
<div class="a t" style="left:833.70px;top:239px;font-size:14px;line-height:14px;">0</div>
<div class="a t" style="left:939.25px;top:239px;font-size:14px;line-height:14px;">0.00</div>
<div class="a t" style="left:1064.25px;top:239px;font-size:14px;line-height:14px;">0.00</div>
<div class="a t" style="left:1189.25px;top:239px;font-size:14px;line-height:14px;">0.00</div>
<div class="a t" style="left:1418.70px;top:239px;font-size:14px;line-height:14px;">0</div>
<div class="a t" style="left:1544.20px;top:239px;font-size:14px;line-height:14px;">50,600.00</div>
<div class="a" style="left:0.50px;top:289.25px;width:1636.50px;height:1.00px;background-image:linear-gradient(90deg,#c4c4c4 50%,transparent 50%);background-size:2px 1px;background-repeat:repeat-x"></div>
<div class="a" style="left:63.50px;top:261.00px;width:1.00px;height:28.75px;background-image:linear-gradient(180deg,#c4c4c4 50%,transparent 50%);background-size:1px 2px;background-repeat:repeat-y"></div>
<div class="a" style="left:223.50px;top:261.00px;width:1.00px;height:28.75px;background-image:linear-gradient(180deg,#c4c4c4 50%,transparent 50%);background-size:1px 2px;background-repeat:repeat-y"></div>
<div class="a" style="left:348.50px;top:261.00px;width:1.00px;height:28.75px;background-image:linear-gradient(180deg,#c4c4c4 50%,transparent 50%);background-size:1px 2px;background-repeat:repeat-y"></div>
<div class="a" style="left:473.50px;top:261.00px;width:1.00px;height:28.75px;background-image:linear-gradient(180deg,#c4c4c4 50%,transparent 50%);background-size:1px 2px;background-repeat:repeat-y"></div>
<div class="a" style="left:598.50px;top:261.00px;width:1.00px;height:28.75px;background-image:linear-gradient(180deg,#c4c4c4 50%,transparent 50%);background-size:1px 2px;background-repeat:repeat-y"></div>
<div class="a" style="left:723.50px;top:261.00px;width:1.00px;height:28.75px;background-image:linear-gradient(180deg,#c4c4c4 50%,transparent 50%);background-size:1px 2px;background-repeat:repeat-y"></div>
<div class="a" style="left:848.50px;top:261.00px;width:1.00px;height:28.75px;background-image:linear-gradient(180deg,#c4c4c4 50%,transparent 50%);background-size:1px 2px;background-repeat:repeat-y"></div>
<div class="a" style="left:973.50px;top:261.00px;width:1.00px;height:28.75px;background-image:linear-gradient(180deg,#c4c4c4 50%,transparent 50%);background-size:1px 2px;background-repeat:repeat-y"></div>
<div class="a" style="left:1098.50px;top:261.00px;width:1.00px;height:28.75px;background-image:linear-gradient(180deg,#c4c4c4 50%,transparent 50%);background-size:1px 2px;background-repeat:repeat-y"></div>
<div class="a" style="left:1223.50px;top:261.00px;width:1.00px;height:28.75px;background-image:linear-gradient(180deg,#c4c4c4 50%,transparent 50%);background-size:1px 2px;background-repeat:repeat-y"></div>
<div class="a" style="left:1433.50px;top:261.00px;width:1.00px;height:28.75px;background-image:linear-gradient(180deg,#c4c4c4 50%,transparent 50%);background-size:1px 2px;background-repeat:repeat-y"></div>
<div class="a" style="left:1613.50px;top:261.00px;width:1.00px;height:28.75px;background-image:linear-gradient(180deg,#c4c4c4 50%,transparent 50%);background-size:1px 2px;background-repeat:repeat-y"></div>
<div class="a t" style="left:48.70px;top:268px;font-size:14px;line-height:14px;">1</div>
<div class="a t" style="left:146.42px;top:268px;font-size:14px;line-height:14px;">191,960.00</div>
<div class="a t" style="left:298.67px;top:268px;font-size:14px;line-height:14px;">50,600</div>
<div class="a t" style="left:458.70px;top:268px;font-size:14px;line-height:14px;">0</div>
<div class="a t" style="left:583.70px;top:268px;font-size:14px;line-height:14px;">0</div>
<div class="a t" style="left:708.70px;top:268px;font-size:14px;line-height:14px;">0</div>
<div class="a t" style="left:833.70px;top:268px;font-size:14px;line-height:14px;">0</div>
<div class="a t" style="left:939.25px;top:268px;font-size:14px;line-height:14px;">0.00</div>
<div class="a t" style="left:1021.42px;top:268px;font-size:14px;line-height:14px;">141,360.00</div>
<div class="a t" style="left:1189.25px;top:268px;font-size:14px;line-height:14px;">0.00</div>
<div class="a t" style="left:1418.70px;top:268px;font-size:14px;line-height:14px;">0</div>
<div class="a t" style="left:1536.42px;top:268px;font-size:14px;line-height:14px;">191,960.00</div>
<div class="a" style="left:0.50px;top:318.00px;width:1636.50px;height:1.00px;background-image:linear-gradient(90deg,#c4c4c4 50%,transparent 50%);background-size:2px 1px;background-repeat:repeat-x"></div>
<div class="a" style="left:63.50px;top:289.75px;width:1.00px;height:28.75px;background-image:linear-gradient(180deg,#c4c4c4 50%,transparent 50%);background-size:1px 2px;background-repeat:repeat-y"></div>
<div class="a" style="left:223.50px;top:289.75px;width:1.00px;height:28.75px;background-image:linear-gradient(180deg,#c4c4c4 50%,transparent 50%);background-size:1px 2px;background-repeat:repeat-y"></div>
<div class="a" style="left:348.50px;top:289.75px;width:1.00px;height:28.75px;background-image:linear-gradient(180deg,#c4c4c4 50%,transparent 50%);background-size:1px 2px;background-repeat:repeat-y"></div>
<div class="a" style="left:473.50px;top:289.75px;width:1.00px;height:28.75px;background-image:linear-gradient(180deg,#c4c4c4 50%,transparent 50%);background-size:1px 2px;background-repeat:repeat-y"></div>
<div class="a" style="left:598.50px;top:289.75px;width:1.00px;height:28.75px;background-image:linear-gradient(180deg,#c4c4c4 50%,transparent 50%);background-size:1px 2px;background-repeat:repeat-y"></div>
<div class="a" style="left:723.50px;top:289.75px;width:1.00px;height:28.75px;background-image:linear-gradient(180deg,#c4c4c4 50%,transparent 50%);background-size:1px 2px;background-repeat:repeat-y"></div>
<div class="a" style="left:848.50px;top:289.75px;width:1.00px;height:28.75px;background-image:linear-gradient(180deg,#c4c4c4 50%,transparent 50%);background-size:1px 2px;background-repeat:repeat-y"></div>
<div class="a" style="left:973.50px;top:289.75px;width:1.00px;height:28.75px;background-image:linear-gradient(180deg,#c4c4c4 50%,transparent 50%);background-size:1px 2px;background-repeat:repeat-y"></div>
<div class="a" style="left:1098.50px;top:289.75px;width:1.00px;height:28.75px;background-image:linear-gradient(180deg,#c4c4c4 50%,transparent 50%);background-size:1px 2px;background-repeat:repeat-y"></div>
<div class="a" style="left:1223.50px;top:289.75px;width:1.00px;height:28.75px;background-image:linear-gradient(180deg,#c4c4c4 50%,transparent 50%);background-size:1px 2px;background-repeat:repeat-y"></div>
<div class="a" style="left:1433.50px;top:289.75px;width:1.00px;height:28.75px;background-image:linear-gradient(180deg,#c4c4c4 50%,transparent 50%);background-size:1px 2px;background-repeat:repeat-y"></div>
<div class="a" style="left:1613.50px;top:289.75px;width:1.00px;height:28.75px;background-image:linear-gradient(180deg,#c4c4c4 50%,transparent 50%);background-size:1px 2px;background-repeat:repeat-y"></div>
<div class="a t" style="left:48.70px;top:297px;font-size:14px;line-height:14px;">1</div>
<div class="a t" style="left:134.75px;top:297px;font-size:14px;line-height:14px;">1,474,399.41</div>
<div class="a t" style="left:298.67px;top:297px;font-size:14px;line-height:14px;">50,600</div>
<div class="a t" style="left:458.70px;top:297px;font-size:14px;line-height:14px;">0</div>
<div class="a t" style="left:583.70px;top:297px;font-size:14px;line-height:14px;">0</div>
<div class="a t" style="left:708.70px;top:297px;font-size:14px;line-height:14px;">0</div>
<div class="a t" style="left:833.70px;top:297px;font-size:14px;line-height:14px;">0</div>
<div class="a t" style="left:939.25px;top:297px;font-size:14px;line-height:14px;">0.00</div>
<div class="a t" style="left:1009.75px;top:297px;font-size:14px;line-height:14px;">1,423,799.41</div>
<div class="a t" style="left:1189.25px;top:297px;font-size:14px;line-height:14px;">0.00</div>
<div class="a t" style="left:1418.70px;top:297px;font-size:14px;line-height:14px;">0</div>
<div class="a t" style="left:1524.75px;top:297px;font-size:14px;line-height:14px;">1,179,519.53</div>
<div class="a" style="left:0.50px;top:346.75px;width:1636.50px;height:1.00px;background-image:linear-gradient(90deg,#c4c4c4 50%,transparent 50%);background-size:2px 1px;background-repeat:repeat-x"></div>
<div class="a" style="left:63.50px;top:318.50px;width:1.00px;height:28.75px;background-image:linear-gradient(180deg,#c4c4c4 50%,transparent 50%);background-size:1px 2px;background-repeat:repeat-y"></div>
<div class="a" style="left:223.50px;top:318.50px;width:1.00px;height:28.75px;background-image:linear-gradient(180deg,#c4c4c4 50%,transparent 50%);background-size:1px 2px;background-repeat:repeat-y"></div>
<div class="a" style="left:348.50px;top:318.50px;width:1.00px;height:28.75px;background-image:linear-gradient(180deg,#c4c4c4 50%,transparent 50%);background-size:1px 2px;background-repeat:repeat-y"></div>
<div class="a" style="left:473.50px;top:318.50px;width:1.00px;height:28.75px;background-image:linear-gradient(180deg,#c4c4c4 50%,transparent 50%);background-size:1px 2px;background-repeat:repeat-y"></div>
<div class="a" style="left:598.50px;top:318.50px;width:1.00px;height:28.75px;background-image:linear-gradient(180deg,#c4c4c4 50%,transparent 50%);background-size:1px 2px;background-repeat:repeat-y"></div>
<div class="a" style="left:723.50px;top:318.50px;width:1.00px;height:28.75px;background-image:linear-gradient(180deg,#c4c4c4 50%,transparent 50%);background-size:1px 2px;background-repeat:repeat-y"></div>
<div class="a" style="left:848.50px;top:318.50px;width:1.00px;height:28.75px;background-image:linear-gradient(180deg,#c4c4c4 50%,transparent 50%);background-size:1px 2px;background-repeat:repeat-y"></div>
<div class="a" style="left:973.50px;top:318.50px;width:1.00px;height:28.75px;background-image:linear-gradient(180deg,#c4c4c4 50%,transparent 50%);background-size:1px 2px;background-repeat:repeat-y"></div>
<div class="a" style="left:1098.50px;top:318.50px;width:1.00px;height:28.75px;background-image:linear-gradient(180deg,#c4c4c4 50%,transparent 50%);background-size:1px 2px;background-repeat:repeat-y"></div>
<div class="a" style="left:1223.50px;top:318.50px;width:1.00px;height:28.75px;background-image:linear-gradient(180deg,#c4c4c4 50%,transparent 50%);background-size:1px 2px;background-repeat:repeat-y"></div>
<div class="a" style="left:1433.50px;top:318.50px;width:1.00px;height:28.75px;background-image:linear-gradient(180deg,#c4c4c4 50%,transparent 50%);background-size:1px 2px;background-repeat:repeat-y"></div>
<div class="a" style="left:1613.50px;top:318.50px;width:1.00px;height:28.75px;background-image:linear-gradient(180deg,#c4c4c4 50%,transparent 50%);background-size:1px 2px;background-repeat:repeat-y"></div>
<div class="a t" style="left:48.70px;top:326px;font-size:14px;line-height:14px;">0</div>
<div class="a t" style="left:154.20px;top:326px;font-size:14px;line-height:14px;">50,600.00</div>
<div class="a t" style="left:298.67px;top:326px;font-size:14px;line-height:14px;">50,600</div>
<div class="a t" style="left:458.70px;top:326px;font-size:14px;line-height:14px;">0</div>
<div class="a t" style="left:583.70px;top:326px;font-size:14px;line-height:14px;">0</div>
<div class="a t" style="left:708.70px;top:326px;font-size:14px;line-height:14px;">0</div>
<div class="a t" style="left:833.70px;top:326px;font-size:14px;line-height:14px;">0</div>
<div class="a t" style="left:939.25px;top:326px;font-size:14px;line-height:14px;">0.00</div>
<div class="a t" style="left:1064.25px;top:326px;font-size:14px;line-height:14px;">0.00</div>
<div class="a t" style="left:1189.25px;top:326px;font-size:14px;line-height:14px;">0.00</div>
<div class="a t" style="left:1418.70px;top:326px;font-size:14px;line-height:14px;">0</div>
<div class="a t" style="left:1544.20px;top:326px;font-size:14px;line-height:14px;">50,600.00</div>
<div class="a" style="left:0.50px;top:375.50px;width:1636.50px;height:1.00px;background-image:linear-gradient(90deg,#c4c4c4 50%,transparent 50%);background-size:2px 1px;background-repeat:repeat-x"></div>
<div class="a" style="left:63.50px;top:347.25px;width:1.00px;height:28.75px;background-image:linear-gradient(180deg,#c4c4c4 50%,transparent 50%);background-size:1px 2px;background-repeat:repeat-y"></div>
<div class="a" style="left:223.50px;top:347.25px;width:1.00px;height:28.75px;background-image:linear-gradient(180deg,#c4c4c4 50%,transparent 50%);background-size:1px 2px;background-repeat:repeat-y"></div>
<div class="a" style="left:348.50px;top:347.25px;width:1.00px;height:28.75px;background-image:linear-gradient(180deg,#c4c4c4 50%,transparent 50%);background-size:1px 2px;background-repeat:repeat-y"></div>
<div class="a" style="left:473.50px;top:347.25px;width:1.00px;height:28.75px;background-image:linear-gradient(180deg,#c4c4c4 50%,transparent 50%);background-size:1px 2px;background-repeat:repeat-y"></div>
<div class="a" style="left:598.50px;top:347.25px;width:1.00px;height:28.75px;background-image:linear-gradient(180deg,#c4c4c4 50%,transparent 50%);background-size:1px 2px;background-repeat:repeat-y"></div>
<div class="a" style="left:723.50px;top:347.25px;width:1.00px;height:28.75px;background-image:linear-gradient(180deg,#c4c4c4 50%,transparent 50%);background-size:1px 2px;background-repeat:repeat-y"></div>
<div class="a" style="left:848.50px;top:347.25px;width:1.00px;height:28.75px;background-image:linear-gradient(180deg,#c4c4c4 50%,transparent 50%);background-size:1px 2px;background-repeat:repeat-y"></div>
<div class="a" style="left:973.50px;top:347.25px;width:1.00px;height:28.75px;background-image:linear-gradient(180deg,#c4c4c4 50%,transparent 50%);background-size:1px 2px;background-repeat:repeat-y"></div>
<div class="a" style="left:1098.50px;top:347.25px;width:1.00px;height:28.75px;background-image:linear-gradient(180deg,#c4c4c4 50%,transparent 50%);background-size:1px 2px;background-repeat:repeat-y"></div>
<div class="a" style="left:1223.50px;top:347.25px;width:1.00px;height:28.75px;background-image:linear-gradient(180deg,#c4c4c4 50%,transparent 50%);background-size:1px 2px;background-repeat:repeat-y"></div>
<div class="a" style="left:1433.50px;top:347.25px;width:1.00px;height:28.75px;background-image:linear-gradient(180deg,#c4c4c4 50%,transparent 50%);background-size:1px 2px;background-repeat:repeat-y"></div>
<div class="a" style="left:1613.50px;top:347.25px;width:1.00px;height:28.75px;background-image:linear-gradient(180deg,#c4c4c4 50%,transparent 50%);background-size:1px 2px;background-repeat:repeat-y"></div>
<div class="a t" style="left:48.70px;top:354px;font-size:14px;line-height:14px;">1</div>
<div class="a t" style="left:126.97px;top:354px;font-size:14px;line-height:14px;">10,499,323.90</div>
<div class="a t" style="left:298.67px;top:354px;font-size:14px;line-height:14px;">50,600</div>
<div class="a t" style="left:458.70px;top:354px;font-size:14px;line-height:14px;">0</div>
<div class="a t" style="left:583.70px;top:354px;font-size:14px;line-height:14px;">0</div>
<div class="a t" style="left:708.70px;top:354px;font-size:14px;line-height:14px;">0</div>
<div class="a t" style="left:798.67px;top:354px;font-size:14px;line-height:14px;">15,100</div>
<div class="a t" style="left:939.25px;top:354px;font-size:14px;line-height:14px;">0.00</div>
<div class="a t" style="left:1001.97px;top:354px;font-size:14px;line-height:14px;">10,433,623.90</div>
<div class="a t" style="left:1189.25px;top:354px;font-size:14px;line-height:14px;">0.00</div>
<div class="a t" style="left:1418.70px;top:354px;font-size:14px;line-height:14px;">0</div>
<div class="a t" style="left:1524.75px;top:354px;font-size:14px;line-height:14px;">3,991,309.36</div>
<div class="a" style="left:0.50px;top:404.25px;width:1636.50px;height:1.00px;background-image:linear-gradient(90deg,#c4c4c4 50%,transparent 50%);background-size:2px 1px;background-repeat:repeat-x"></div>
<div class="a" style="left:63.50px;top:376.00px;width:1.00px;height:28.75px;background-image:linear-gradient(180deg,#c4c4c4 50%,transparent 50%);background-size:1px 2px;background-repeat:repeat-y"></div>
<div class="a" style="left:223.50px;top:376.00px;width:1.00px;height:28.75px;background-image:linear-gradient(180deg,#c4c4c4 50%,transparent 50%);background-size:1px 2px;background-repeat:repeat-y"></div>
<div class="a" style="left:348.50px;top:376.00px;width:1.00px;height:28.75px;background-image:linear-gradient(180deg,#c4c4c4 50%,transparent 50%);background-size:1px 2px;background-repeat:repeat-y"></div>
<div class="a" style="left:473.50px;top:376.00px;width:1.00px;height:28.75px;background-image:linear-gradient(180deg,#c4c4c4 50%,transparent 50%);background-size:1px 2px;background-repeat:repeat-y"></div>
<div class="a" style="left:598.50px;top:376.00px;width:1.00px;height:28.75px;background-image:linear-gradient(180deg,#c4c4c4 50%,transparent 50%);background-size:1px 2px;background-repeat:repeat-y"></div>
<div class="a" style="left:723.50px;top:376.00px;width:1.00px;height:28.75px;background-image:linear-gradient(180deg,#c4c4c4 50%,transparent 50%);background-size:1px 2px;background-repeat:repeat-y"></div>
<div class="a" style="left:848.50px;top:376.00px;width:1.00px;height:28.75px;background-image:linear-gradient(180deg,#c4c4c4 50%,transparent 50%);background-size:1px 2px;background-repeat:repeat-y"></div>
<div class="a" style="left:973.50px;top:376.00px;width:1.00px;height:28.75px;background-image:linear-gradient(180deg,#c4c4c4 50%,transparent 50%);background-size:1px 2px;background-repeat:repeat-y"></div>
<div class="a" style="left:1098.50px;top:376.00px;width:1.00px;height:28.75px;background-image:linear-gradient(180deg,#c4c4c4 50%,transparent 50%);background-size:1px 2px;background-repeat:repeat-y"></div>
<div class="a" style="left:1223.50px;top:376.00px;width:1.00px;height:28.75px;background-image:linear-gradient(180deg,#c4c4c4 50%,transparent 50%);background-size:1px 2px;background-repeat:repeat-y"></div>
<div class="a" style="left:1433.50px;top:376.00px;width:1.00px;height:28.75px;background-image:linear-gradient(180deg,#c4c4c4 50%,transparent 50%);background-size:1px 2px;background-repeat:repeat-y"></div>
<div class="a" style="left:1613.50px;top:376.00px;width:1.00px;height:28.75px;background-image:linear-gradient(180deg,#c4c4c4 50%,transparent 50%);background-size:1px 2px;background-repeat:repeat-y"></div>
<div class="a t" style="left:48.70px;top:383px;font-size:14px;line-height:14px;">1</div>
<div class="a t" style="left:134.75px;top:383px;font-size:14px;line-height:14px;">1,527,725.00</div>
<div class="a t" style="left:298.67px;top:383px;font-size:14px;line-height:14px;">50,600</div>
<div class="a t" style="left:458.70px;top:383px;font-size:14px;line-height:14px;">0</div>
<div class="a t" style="left:583.70px;top:383px;font-size:14px;line-height:14px;">0</div>
<div class="a t" style="left:708.70px;top:383px;font-size:14px;line-height:14px;">0</div>
<div class="a t" style="left:833.70px;top:383px;font-size:14px;line-height:14px;">0</div>
<div class="a t" style="left:939.25px;top:383px;font-size:14px;line-height:14px;">0.00</div>
<div class="a t" style="left:1009.75px;top:383px;font-size:14px;line-height:14px;">1,477,125.00</div>
<div class="a t" style="left:1189.25px;top:383px;font-size:14px;line-height:14px;">0.00</div>
<div class="a t" style="left:1418.70px;top:383px;font-size:14px;line-height:14px;">0</div>
<div class="a t" style="left:1524.75px;top:383px;font-size:14px;line-height:14px;">1,222,180.00</div>
<div class="a" style="left:0.50px;top:433.00px;width:1636.50px;height:1.00px;background-image:linear-gradient(90deg,#c4c4c4 50%,transparent 50%);background-size:2px 1px;background-repeat:repeat-x"></div>
<div class="a" style="left:63.50px;top:404.75px;width:1.00px;height:28.75px;background-image:linear-gradient(180deg,#c4c4c4 50%,transparent 50%);background-size:1px 2px;background-repeat:repeat-y"></div>
<div class="a" style="left:223.50px;top:404.75px;width:1.00px;height:28.75px;background-image:linear-gradient(180deg,#c4c4c4 50%,transparent 50%);background-size:1px 2px;background-repeat:repeat-y"></div>
<div class="a" style="left:348.50px;top:404.75px;width:1.00px;height:28.75px;background-image:linear-gradient(180deg,#c4c4c4 50%,transparent 50%);background-size:1px 2px;background-repeat:repeat-y"></div>
<div class="a" style="left:473.50px;top:404.75px;width:1.00px;height:28.75px;background-image:linear-gradient(180deg,#c4c4c4 50%,transparent 50%);background-size:1px 2px;background-repeat:repeat-y"></div>
<div class="a" style="left:598.50px;top:404.75px;width:1.00px;height:28.75px;background-image:linear-gradient(180deg,#c4c4c4 50%,transparent 50%);background-size:1px 2px;background-repeat:repeat-y"></div>
<div class="a" style="left:723.50px;top:404.75px;width:1.00px;height:28.75px;background-image:linear-gradient(180deg,#c4c4c4 50%,transparent 50%);background-size:1px 2px;background-repeat:repeat-y"></div>
<div class="a" style="left:848.50px;top:404.75px;width:1.00px;height:28.75px;background-image:linear-gradient(180deg,#c4c4c4 50%,transparent 50%);background-size:1px 2px;background-repeat:repeat-y"></div>
<div class="a" style="left:973.50px;top:404.75px;width:1.00px;height:28.75px;background-image:linear-gradient(180deg,#c4c4c4 50%,transparent 50%);background-size:1px 2px;background-repeat:repeat-y"></div>
<div class="a" style="left:1098.50px;top:404.75px;width:1.00px;height:28.75px;background-image:linear-gradient(180deg,#c4c4c4 50%,transparent 50%);background-size:1px 2px;background-repeat:repeat-y"></div>
<div class="a" style="left:1223.50px;top:404.75px;width:1.00px;height:28.75px;background-image:linear-gradient(180deg,#c4c4c4 50%,transparent 50%);background-size:1px 2px;background-repeat:repeat-y"></div>
<div class="a" style="left:1433.50px;top:404.75px;width:1.00px;height:28.75px;background-image:linear-gradient(180deg,#c4c4c4 50%,transparent 50%);background-size:1px 2px;background-repeat:repeat-y"></div>
<div class="a" style="left:1613.50px;top:404.75px;width:1.00px;height:28.75px;background-image:linear-gradient(180deg,#c4c4c4 50%,transparent 50%);background-size:1px 2px;background-repeat:repeat-y"></div>
<div class="a t" style="left:48.70px;top:412px;font-size:14px;line-height:14px;">0</div>
<div class="a t" style="left:146.42px;top:412px;font-size:14px;line-height:14px;">167,800.00</div>
<div class="a t" style="left:298.67px;top:412px;font-size:14px;line-height:14px;">50,600</div>
<div class="a t" style="left:458.70px;top:412px;font-size:14px;line-height:14px;">0</div>
<div class="a t" style="left:583.70px;top:412px;font-size:14px;line-height:14px;">0</div>
<div class="a t" style="left:666.92px;top:412px;font-size:14px;line-height:14px;">117,200</div>
<div class="a t" style="left:833.70px;top:412px;font-size:14px;line-height:14px;">0</div>
<div class="a t" style="left:939.25px;top:412px;font-size:14px;line-height:14px;">0.00</div>
<div class="a t" style="left:1064.25px;top:412px;font-size:14px;line-height:14px;">0.00</div>
<div class="a t" style="left:1189.25px;top:412px;font-size:14px;line-height:14px;">0.00</div>
<div class="a t" style="left:1418.70px;top:412px;font-size:14px;line-height:14px;">0</div>
<div class="a t" style="left:1536.42px;top:412px;font-size:14px;line-height:14px;">167,800.00</div>
<div class="a" style="left:0.50px;top:461.75px;width:1636.50px;height:1.00px;background-image:linear-gradient(90deg,#c4c4c4 50%,transparent 50%);background-size:2px 1px;background-repeat:repeat-x"></div>
<div class="a" style="left:63.50px;top:433.50px;width:1.00px;height:28.75px;background-image:linear-gradient(180deg,#c4c4c4 50%,transparent 50%);background-size:1px 2px;background-repeat:repeat-y"></div>
<div class="a" style="left:223.50px;top:433.50px;width:1.00px;height:28.75px;background-image:linear-gradient(180deg,#c4c4c4 50%,transparent 50%);background-size:1px 2px;background-repeat:repeat-y"></div>
<div class="a" style="left:348.50px;top:433.50px;width:1.00px;height:28.75px;background-image:linear-gradient(180deg,#c4c4c4 50%,transparent 50%);background-size:1px 2px;background-repeat:repeat-y"></div>
<div class="a" style="left:473.50px;top:433.50px;width:1.00px;height:28.75px;background-image:linear-gradient(180deg,#c4c4c4 50%,transparent 50%);background-size:1px 2px;background-repeat:repeat-y"></div>
<div class="a" style="left:598.50px;top:433.50px;width:1.00px;height:28.75px;background-image:linear-gradient(180deg,#c4c4c4 50%,transparent 50%);background-size:1px 2px;background-repeat:repeat-y"></div>
<div class="a" style="left:723.50px;top:433.50px;width:1.00px;height:28.75px;background-image:linear-gradient(180deg,#c4c4c4 50%,transparent 50%);background-size:1px 2px;background-repeat:repeat-y"></div>
<div class="a" style="left:848.50px;top:433.50px;width:1.00px;height:28.75px;background-image:linear-gradient(180deg,#c4c4c4 50%,transparent 50%);background-size:1px 2px;background-repeat:repeat-y"></div>
<div class="a" style="left:973.50px;top:433.50px;width:1.00px;height:28.75px;background-image:linear-gradient(180deg,#c4c4c4 50%,transparent 50%);background-size:1px 2px;background-repeat:repeat-y"></div>
<div class="a" style="left:1098.50px;top:433.50px;width:1.00px;height:28.75px;background-image:linear-gradient(180deg,#c4c4c4 50%,transparent 50%);background-size:1px 2px;background-repeat:repeat-y"></div>
<div class="a" style="left:1223.50px;top:433.50px;width:1.00px;height:28.75px;background-image:linear-gradient(180deg,#c4c4c4 50%,transparent 50%);background-size:1px 2px;background-repeat:repeat-y"></div>
<div class="a" style="left:1433.50px;top:433.50px;width:1.00px;height:28.75px;background-image:linear-gradient(180deg,#c4c4c4 50%,transparent 50%);background-size:1px 2px;background-repeat:repeat-y"></div>
<div class="a" style="left:1613.50px;top:433.50px;width:1.00px;height:28.75px;background-image:linear-gradient(180deg,#c4c4c4 50%,transparent 50%);background-size:1px 2px;background-repeat:repeat-y"></div>
<div class="a t" style="left:48.70px;top:441px;font-size:14px;line-height:14px;">1</div>
<div class="a t" style="left:134.75px;top:441px;font-size:14px;line-height:14px;">5,048,099.95</div>
<div class="a t" style="left:298.67px;top:441px;font-size:14px;line-height:14px;">50,600</div>
<div class="a t" style="left:458.70px;top:441px;font-size:14px;line-height:14px;">0</div>
<div class="a t" style="left:583.70px;top:441px;font-size:14px;line-height:14px;">0</div>
<div class="a t" style="left:708.70px;top:441px;font-size:14px;line-height:14px;">0</div>
<div class="a t" style="left:833.70px;top:441px;font-size:14px;line-height:14px;">0</div>
<div class="a t" style="left:939.25px;top:441px;font-size:14px;line-height:14px;">0.00</div>
<div class="a t" style="left:1009.75px;top:441px;font-size:14px;line-height:14px;">4,997,499.95</div>
<div class="a t" style="left:1189.25px;top:441px;font-size:14px;line-height:14px;">0.00</div>
<div class="a t" style="left:1418.70px;top:441px;font-size:14px;line-height:14px;">0</div>
<div class="a t" style="left:1524.75px;top:441px;font-size:14px;line-height:14px;">2,549,349.98</div>
<div class="a" style="left:0.50px;top:490.50px;width:1636.50px;height:1.00px;background-image:linear-gradient(90deg,#c4c4c4 50%,transparent 50%);background-size:2px 1px;background-repeat:repeat-x"></div>
<div class="a" style="left:63.50px;top:462.25px;width:1.00px;height:28.75px;background-image:linear-gradient(180deg,#c4c4c4 50%,transparent 50%);background-size:1px 2px;background-repeat:repeat-y"></div>
<div class="a" style="left:223.50px;top:462.25px;width:1.00px;height:28.75px;background-image:linear-gradient(180deg,#c4c4c4 50%,transparent 50%);background-size:1px 2px;background-repeat:repeat-y"></div>
<div class="a" style="left:348.50px;top:462.25px;width:1.00px;height:28.75px;background-image:linear-gradient(180deg,#c4c4c4 50%,transparent 50%);background-size:1px 2px;background-repeat:repeat-y"></div>
<div class="a" style="left:473.50px;top:462.25px;width:1.00px;height:28.75px;background-image:linear-gradient(180deg,#c4c4c4 50%,transparent 50%);background-size:1px 2px;background-repeat:repeat-y"></div>
<div class="a" style="left:598.50px;top:462.25px;width:1.00px;height:28.75px;background-image:linear-gradient(180deg,#c4c4c4 50%,transparent 50%);background-size:1px 2px;background-repeat:repeat-y"></div>
<div class="a" style="left:723.50px;top:462.25px;width:1.00px;height:28.75px;background-image:linear-gradient(180deg,#c4c4c4 50%,transparent 50%);background-size:1px 2px;background-repeat:repeat-y"></div>
<div class="a" style="left:848.50px;top:462.25px;width:1.00px;height:28.75px;background-image:linear-gradient(180deg,#c4c4c4 50%,transparent 50%);background-size:1px 2px;background-repeat:repeat-y"></div>
<div class="a" style="left:973.50px;top:462.25px;width:1.00px;height:28.75px;background-image:linear-gradient(180deg,#c4c4c4 50%,transparent 50%);background-size:1px 2px;background-repeat:repeat-y"></div>
<div class="a" style="left:1098.50px;top:462.25px;width:1.00px;height:28.75px;background-image:linear-gradient(180deg,#c4c4c4 50%,transparent 50%);background-size:1px 2px;background-repeat:repeat-y"></div>
<div class="a" style="left:1223.50px;top:462.25px;width:1.00px;height:28.75px;background-image:linear-gradient(180deg,#c4c4c4 50%,transparent 50%);background-size:1px 2px;background-repeat:repeat-y"></div>
<div class="a" style="left:1433.50px;top:462.25px;width:1.00px;height:28.75px;background-image:linear-gradient(180deg,#c4c4c4 50%,transparent 50%);background-size:1px 2px;background-repeat:repeat-y"></div>
<div class="a" style="left:1613.50px;top:462.25px;width:1.00px;height:28.75px;background-image:linear-gradient(180deg,#c4c4c4 50%,transparent 50%);background-size:1px 2px;background-repeat:repeat-y"></div>
<div class="a t" style="left:48.70px;top:469px;font-size:14px;line-height:14px;">0</div>
<div class="a t" style="left:146.42px;top:469px;font-size:14px;line-height:14px;">318,636.00</div>
<div class="a t" style="left:298.67px;top:469px;font-size:14px;line-height:14px;">50,600</div>
<div class="a t" style="left:458.70px;top:469px;font-size:14px;line-height:14px;">0</div>
<div class="a t" style="left:540.89px;top:469px;font-size:14px;line-height:14px;">129,000</div>
<div class="a t" style="left:666.92px;top:469px;font-size:14px;line-height:14px;">117,200</div>
<div class="a t" style="left:833.70px;top:469px;font-size:14px;line-height:14px;">0</div>
<div class="a t" style="left:939.25px;top:469px;font-size:14px;line-height:14px;">0.00</div>
<div class="a t" style="left:1029.20px;top:469px;font-size:14px;line-height:14px;">21,836.00</div>
<div class="a t" style="left:1189.25px;top:469px;font-size:14px;line-height:14px;">0.00</div>
<div class="a t" style="left:1418.70px;top:469px;font-size:14px;line-height:14px;">0</div>
<div class="a t" style="left:1536.42px;top:469px;font-size:14px;line-height:14px;">318,636.00</div>
</div>
<div class="a" style="left:250.5px;top:799px;width:1636.5px;height:2.5px;background:#bdbdbd"></div>
<div class="a" style="left:250.5px;top:801.5px;width:1636.5px;height:25.5px;background:#ffffe4"></div>
<div class="a" style="left:250.5px;top:826.5px;width:1636.5px;height:1px;background-image:linear-gradient(90deg,#c4c4c4 50%,transparent 50%);background-size:2px 1px;background-repeat:repeat-x"></div>
<div class="a" style="left:313.5px;top:802px;width:1px;height:25px;background-image:linear-gradient(180deg,#c8c8c8 50%,transparent 50%);background-size:1px 2px;background-repeat:repeat-y"></div>
<div class="a" style="left:473.5px;top:802px;width:1px;height:25px;background-image:linear-gradient(180deg,#c8c8c8 50%,transparent 50%);background-size:1px 2px;background-repeat:repeat-y"></div>
<div class="a" style="left:598.5px;top:802px;width:1px;height:25px;background-image:linear-gradient(180deg,#c8c8c8 50%,transparent 50%);background-size:1px 2px;background-repeat:repeat-y"></div>
<div class="a" style="left:723.5px;top:802px;width:1px;height:25px;background-image:linear-gradient(180deg,#c8c8c8 50%,transparent 50%);background-size:1px 2px;background-repeat:repeat-y"></div>
<div class="a" style="left:848.5px;top:802px;width:1px;height:25px;background-image:linear-gradient(180deg,#c8c8c8 50%,transparent 50%);background-size:1px 2px;background-repeat:repeat-y"></div>
<div class="a" style="left:973.5px;top:802px;width:1px;height:25px;background-image:linear-gradient(180deg,#c8c8c8 50%,transparent 50%);background-size:1px 2px;background-repeat:repeat-y"></div>
<div class="a" style="left:1098.5px;top:802px;width:1px;height:25px;background-image:linear-gradient(180deg,#c8c8c8 50%,transparent 50%);background-size:1px 2px;background-repeat:repeat-y"></div>
<div class="a" style="left:1223.5px;top:802px;width:1px;height:25px;background-image:linear-gradient(180deg,#c8c8c8 50%,transparent 50%);background-size:1px 2px;background-repeat:repeat-y"></div>
<div class="a" style="left:1348.5px;top:802px;width:1px;height:25px;background-image:linear-gradient(180deg,#c8c8c8 50%,transparent 50%);background-size:1px 2px;background-repeat:repeat-y"></div>
<div class="a" style="left:1473.5px;top:802px;width:1px;height:25px;background-image:linear-gradient(180deg,#c8c8c8 50%,transparent 50%);background-size:1px 2px;background-repeat:repeat-y"></div>
<div class="a" style="left:1683.5px;top:802px;width:1px;height:25px;background-image:linear-gradient(180deg,#c8c8c8 50%,transparent 50%);background-size:1px 2px;background-repeat:repeat-y"></div>
<div class="a" style="left:1863.5px;top:802px;width:1px;height:25px;background-image:linear-gradient(180deg,#c8c8c8 50%,transparent 50%);background-size:1px 2px;background-repeat:repeat-y"></div>
<div class="a t" style="left:348.69px;top:808px;font-size:14px;line-height:14px;font-weight:bold;color:#0000c8;letter-spacing:0.654px;-webkit-text-stroke:0.25px #0000c8;">1,049,238,594.80</div>
<div class="a t" style="left:516.11px;top:808px;font-size:14px;line-height:14px;font-weight:bold;color:#0000c8;letter-spacing:0.701px;-webkit-text-stroke:0.25px #0000c8;">13,041,180</div>
<div class="a t" style="left:632.63px;top:808px;font-size:14px;line-height:14px;font-weight:bold;color:#0000c8;letter-spacing:0.701px;-webkit-text-stroke:0.25px #0000c8;">203,087,000</div>
<div class="a t" style="left:766.11px;top:808px;font-size:14px;line-height:14px;font-weight:bold;color:#0000c8;letter-spacing:0.701px;-webkit-text-stroke:0.25px #0000c8;">79,306,000</div>
<div class="a t" style="left:882.63px;top:808px;font-size:14px;line-height:14px;font-weight:bold;color:#0000c8;letter-spacing:0.701px;-webkit-text-stroke:0.25px #0000c8;">105,690,400</div>
<div class="a t" style="left:1007.63px;top:808px;font-size:14px;line-height:14px;font-weight:bold;color:#0000c8;letter-spacing:0.701px;-webkit-text-stroke:0.25px #0000c8;">223,716,800</div>
<div class="a t" style="left:1119.91px;top:808px;font-size:14px;line-height:14px;font-weight:bold;color:#0000c8;letter-spacing:0.671px;-webkit-text-stroke:0.25px #0000c8;">12,528,000.00</div>
<div class="a t" style="left:1236.41px;top:808px;font-size:14px;line-height:14px;font-weight:bold;color:#0000c8;letter-spacing:0.674px;-webkit-text-stroke:0.25px #0000c8;">367,634,317.81</div>
<div class="a t" style="left:1369.91px;top:808px;font-size:14px;line-height:14px;font-weight:bold;color:#0000c8;letter-spacing:0.671px;-webkit-text-stroke:0.25px #0000c8;">44,234,896.99</div>
<div class="a t" style="left:1669.70px;top:808px;font-size:14px;line-height:14px;font-weight:bold;color:#0000c8;-webkit-text-stroke:0.25px #0000c8;">0</div>
<div class="a t" style="left:1751.41px;top:808px;font-size:14px;line-height:14px;font-weight:bold;color:#0000c8;letter-spacing:0.674px;-webkit-text-stroke:0.25px #0000c8;">806,325,599.06</div>
<div class="a" style="left:1887px;top:320.5px;width:22.5px;height:507px;background:#f2f2f2"></div>
<div class="a" style="left:1896.5px;top:342.5px;width:3px;height:21px;background:#8a8a8a;border-radius:1px"></div>
<div class="a" style="left:249px;top:319.5px;width:1662px;height:531px;border:1px solid #a3a3a3"></div>
<div class="a" style="left:247px;top:319.5px;width:2px;height:531px;background:#cccccc"></div>
<div class="a t" style="left:256.50px;top:831px;font-size:14px;line-height:14px;letter-spacing:0.410px;">Dòng:</div>
<div class="a" style="left:305px;top:829.5px;width:26px;height:17.5px;background:#f7f9fc;border:1px solid #d2d6dc;border-radius:4px"></div>
<svg class="a" style="left:309px;top:831px;" width="18" height="14" viewBox="0 0 18 14"><rect x="2.5" y="1.5" width="2.6" height="11" fill="#2a6fd6"/><path d="M14.5 1.5 L6 7 L14.5 12.5 Z" fill="#2a6fd6"/></svg>
<div class="a" style="left:335.5px;top:829.5px;width:25.5px;height:17.5px;background:#f3f3f3;border-radius:4px"></div>
<svg class="a" style="left:341px;top:831px;" width="14" height="14" viewBox="0 0 14 14"><path d="M10.5 1.5 L3 7 L10.5 12.5 Z" fill="#8e8e8e"/></svg>
<div class="a" style="left:365px;top:828px;width:53.5px;height:19.5px;background:#fff;border:1px solid #9e9e9e"></div>
<div class="a t" style="left:409.00px;top:831px;font-size:14px;line-height:14px;">1</div>
<div class="a t" style="left:422.00px;top:831px;font-size:14px;line-height:14px;">/</div>
<div class="a t" style="left:441.60px;top:831px;font-size:14px;line-height:14px;letter-spacing:-1.080px;">275</div>
<div class="a" style="left:473px;top:829.5px;width:27.5px;height:17.5px;background:#f7f9fc;border:1px solid #d2d6dc;border-radius:4px"></div>
<svg class="a" style="left:479px;top:831px;" width="14" height="14" viewBox="0 0 14 14"><path d="M3.5 1.5 L11 7 L3.5 12.5 Z" fill="#2a6fd6"/></svg>
<div class="a" style="left:503.5px;top:829.5px;width:26.5px;height:17.5px;background:#f7f9fc;border:1px solid #d2d6dc;border-radius:4px"></div>
<svg class="a" style="left:508px;top:831px;" width="18" height="14" viewBox="0 0 18 14"><path d="M3 1.5 L11.5 7 L3 12.5 Z" fill="#2a6fd6"/><rect x="12.5" y="1.5" width="2.6" height="11" fill="#2a6fd6"/></svg>
<div class="a" style="left:882px;top:837px;width:377.5px;height:3px;background:#8a8a8a;border-radius:1px"></div>
<div class="a" style="left:250px;top:859.5px;width:1661px;height:52.5px;border:1px solid #d2dce5;border-radius:4px"></div>
<div class="a" style="left:945.5px;top:867.5px;width:287px;height:35.5px;background:#fbfbfb;border:1px solid #d3d3d3;border-radius:4px;box-shadow:0 1px 0 #e2e2e2"></div>
<svg class="a" style="left:959px;top:873px;" width="24" height="24" viewBox="0 0 24 24">
<defs><linearGradient id="pp" x1="0" y1="0" x2="0" y2="1"><stop offset="0" stop-color="#eef5ff"/><stop offset="1" stop-color="#a9c8f0"/></linearGradient></defs>
<path d="M2.2 2.3 L9 1.6 L12.2 8.6 L5.2 9.8 Z" fill="url(#pp)" stroke="#9cb4d8" stroke-width="0.5"/>
<path d="M2 13 L10 9.6 L19.2 12 L11 15.8 Z" fill="#e2e2e2" stroke="#9a9a9a" stroke-width="0.5"/>
<path d="M2 13 L11 15.8 L11 21.6 L2 18.4 Z" fill="#bdbdbd" stroke="#8a8a8a" stroke-width="0.5"/>
<path d="M11 15.8 L19.2 12 L19.2 17.4 L11 21.6 Z" fill="#a3a3a3" stroke="#7e7e7e" stroke-width="0.5"/>
<path d="M3.5 16.2 L10 18.4" stroke="#f4f4f4" stroke-width="1.2"/>
<path d="M12.2 18.6 L18 15.6" stroke="#d6d6d6" stroke-width="1"/>
<rect x="16.8" y="12.6" width="1.2" height="1.6" fill="#4caf50"/>
<circle cx="18.2" cy="6.4" r="3.9" fill="#1a1a1a"/>
<path d="M16.1 6.4 L17.7 8 L20.4 4.6" fill="none" stroke="#fff" stroke-width="1.3"/>
</svg>
<div class="a t" style="left:986.25px;top:880px;font-size:13.8px;line-height:13.8px;letter-spacing:-0.286px;">In mẫu C79-HD (TT102/2018/TT-BTC)</div>
<div class="a" style="left:250px;top:924px;width:1661px;height:60px;border:1px solid #d2dce5;border-radius:4px"></div>
<div class="a" style="left:898px;top:932px;width:191px;height:42.5px;background:#fbfbfb;border:1px solid #d3d3d3;border-radius:4px;box-shadow:0 1px 0 #e2e2e2"></div>
<svg class="a" style="left:966.5px;top:941.5px;" width="20" height="22" viewBox="0 0 20 22">
<rect x="1.2" y="1.3" width="17.4" height="14.8" fill="#f4efe4" stroke="#7f9fca" stroke-width="0.8"/>
<rect x="1" y="1" width="17.8" height="2.6" fill="#1f6fd8"/>
<rect x="1" y="13.9" width="17.8" height="2.2" fill="#3f7bd6"/>
<rect x="2.2" y="3.6" width="1.2" height="10.3" fill="#c9d6ea"/>
<circle cx="11.5" cy="10.2" r="4.7" fill="#d6ecf6" stroke="#8ea4b8" stroke-width="1"/>
<circle cx="10.2" cy="8.6" r="1.4" fill="#fff" opacity="0.9"/>
<path d="M7.6 14.2 L2.6 20.2" stroke="#e59a2c" stroke-width="2.6" stroke-linecap="round"/>
</svg>
<div class="a t" style="left:991.00px;top:948px;font-size:13.8px;line-height:13.8px;letter-spacing:-1.688px;">Xem</div>
<div class="a" style="left:999.8px;top:960px;width:7.5px;height:1px;background:#000"></div>
<div class="a" style="left:1092.5px;top:932px;width:191.5px;height:42.5px;background:#fbfbfb;border:1px solid #d3d3d3;border-radius:4px;box-shadow:0 1px 0 #e2e2e2"></div>
<svg class="a" style="left:1155px;top:942px;" width="24" height="22" viewBox="0 0 24 22">
<path d="M4.2 14.7 L4.2 2.4 L13 2.4 L13 14.7" fill="#fff" stroke="#000" stroke-width="1.2"/>
<path d="M2.3 14.9 L18.1 14.9" stroke="#000" stroke-width="1.1"/>
<path d="M4.4 2.8 L9.6 7.4 L9.6 20.3 L4.4 15.7 Z" fill="#8f8f0c" stroke="#000" stroke-width="1"/>
<circle cx="8.4" cy="12.4" r="0.7" fill="#000"/>
<path d="M14.9 8.4 L19.8 4.1 L19.8 6.4 L22.2 6.4 L22.2 10.4 L19.8 10.4 L19.8 12.8 Z" fill="#00008e"/>
</svg>
<div class="a t" style="left:1183.75px;top:948px;font-size:13.8px;line-height:13.8px;letter-spacing:-0.495px;">Đóng</div>
<div class="a" style="left:1201.25px;top:960px;width:12px;height:1px;background:#000"></div>
<svg class="a" style="left:209px;top:997px;" width="20" height="20" viewBox="0 0 20 20">
<path d="M2.5 5 L16 2.5 Q18 2.3 18 4.2 L18 16 Q18 17.6 16.3 17.9 L3.8 19.5 Q2 19.7 2 17.9 Z" fill="#c9dcf5" stroke="#7da0d8" stroke-width="0.8"/>
<path d="M2.2 5 L16 2.5 Q18 2.3 18 4.2 L18 7 L2.2 9.2 Z" fill="#3d6fd6"/>
<rect x="12.5" y="8.6" width="3.5" height="2.6" fill="#ef5a5a"/>
<path d="M4 12 L16 10.6 M4 14.6 L16 13.2 M7.5 9.8 L7.7 18 M11.5 9.2 L11.6 17.6" stroke="#9fbde8" stroke-width="0.7"/>
</svg>
<svg class="a" style="left:764px;top:997px;" width="24" height="20" viewBox="0 0 24 20">
<path d="M12.6 16.8 Q12.6 11.3 17.2 11 Q21.9 11.3 21.9 16.8 Z" fill="#3fae3f"/>
<circle cx="17" cy="6.6" r="3.6" fill="#f3a640"/>
<path d="M13.4 6 Q13.6 2.4 17 2.3 Q20.6 2.4 20.7 6 Q19 4.3 17 4.6 Q15 4.3 13.4 6 Z" fill="#d7b55a"/>
<path d="M3.2 17.6 Q3.2 12.3 8.6 11.9 Q14 12.3 14 17.6 Z" fill="#4f6ff2"/>
<circle cx="8.8" cy="8" r="3.4" fill="#e3741f"/>
<path d="M4.9 8.6 Q4.6 3.7 8.8 3.6 Q13 3.7 12.7 8.6 Q11.6 5.9 8.8 6.1 Q6 5.9 4.9 8.6 Z" fill="#4a4a4a"/>
</svg>
<svg class="a" style="left:1323px;top:999.3px;" width="24" height="20" viewBox="0 0 24 20">
<path d="M2.5 5.3 Q7.5 0.6 10.3 0.8 Q13.6 1 17.3 4.7 Q13 3.6 10.5 5.8 Q6.6 3.9 2.5 5.3 Z" fill="#19aeea"/>
<path d="M4.6 6.4 Q9.2 6 11.6 8.2 Q15.5 6.3 19.8 5.4 Q14.5 10.2 10.9 10.6 Q7.4 10.3 4.6 6.4 Z" fill="#ee3344"/>
<path d="M8.6 2.8 L11.6 4.6 L12 9.4 L9.2 7.4 Z" fill="#6a5fc0"/>
<rect x="3" y="12.6" width="14" height="1.4" fill="#9a9a9a" opacity="0.7"/>
</svg>
<svg class="a" style="left:1780px;top:995px;" width="24" height="24" viewBox="0 0 24 24">
<defs><radialGradient id="ig" cx="0.4" cy="0.3" r="0.8"><stop offset="0" stop-color="#ffffff"/><stop offset="0.6" stop-color="#dbe9fb"/><stop offset="1" stop-color="#8fb4e6"/></radialGradient></defs>
<path d="M11.8 1.8 A9.3 8.9 0 0 1 14.6 19.4 L14.2 22.3 L11 19.6 A9.3 8.9 0 0 1 11.8 1.8 Z" fill="url(#ig)" stroke="#6f93c8" stroke-width="0.8"/>
<circle cx="11.7" cy="4.6" r="1.3" fill="#17237e"/>
<path d="M10.1 7.4 L13.2 7.4 L13.2 15 L14.2 15 L14.2 16.2 L9.6 16.2 L9.6 15 L10.6 15 L10.6 8.6 L10.1 8.6 Z" fill="#17237e"/>
</svg>
<svg class="a" style="left:1905px;top:1006px;" width="14" height="13" viewBox="0 0 14 13">
<rect x="9.8" y="1.8" width="2" height="2" fill="#c2c2c2"/><rect x="5.8" y="5.5" width="2" height="2" fill="#c2c2c2"/><rect x="9.8" y="5.5" width="2" height="2" fill="#c2c2c2"/>
<rect x="1.8" y="9.3" width="2" height="2" fill="#c2c2c2"/><rect x="5.8" y="9.3" width="2" height="2" fill="#c2c2c2"/><rect x="9.8" y="9.3" width="2" height="2" fill="#c2c2c2"/>
</svg>
</body></html>
